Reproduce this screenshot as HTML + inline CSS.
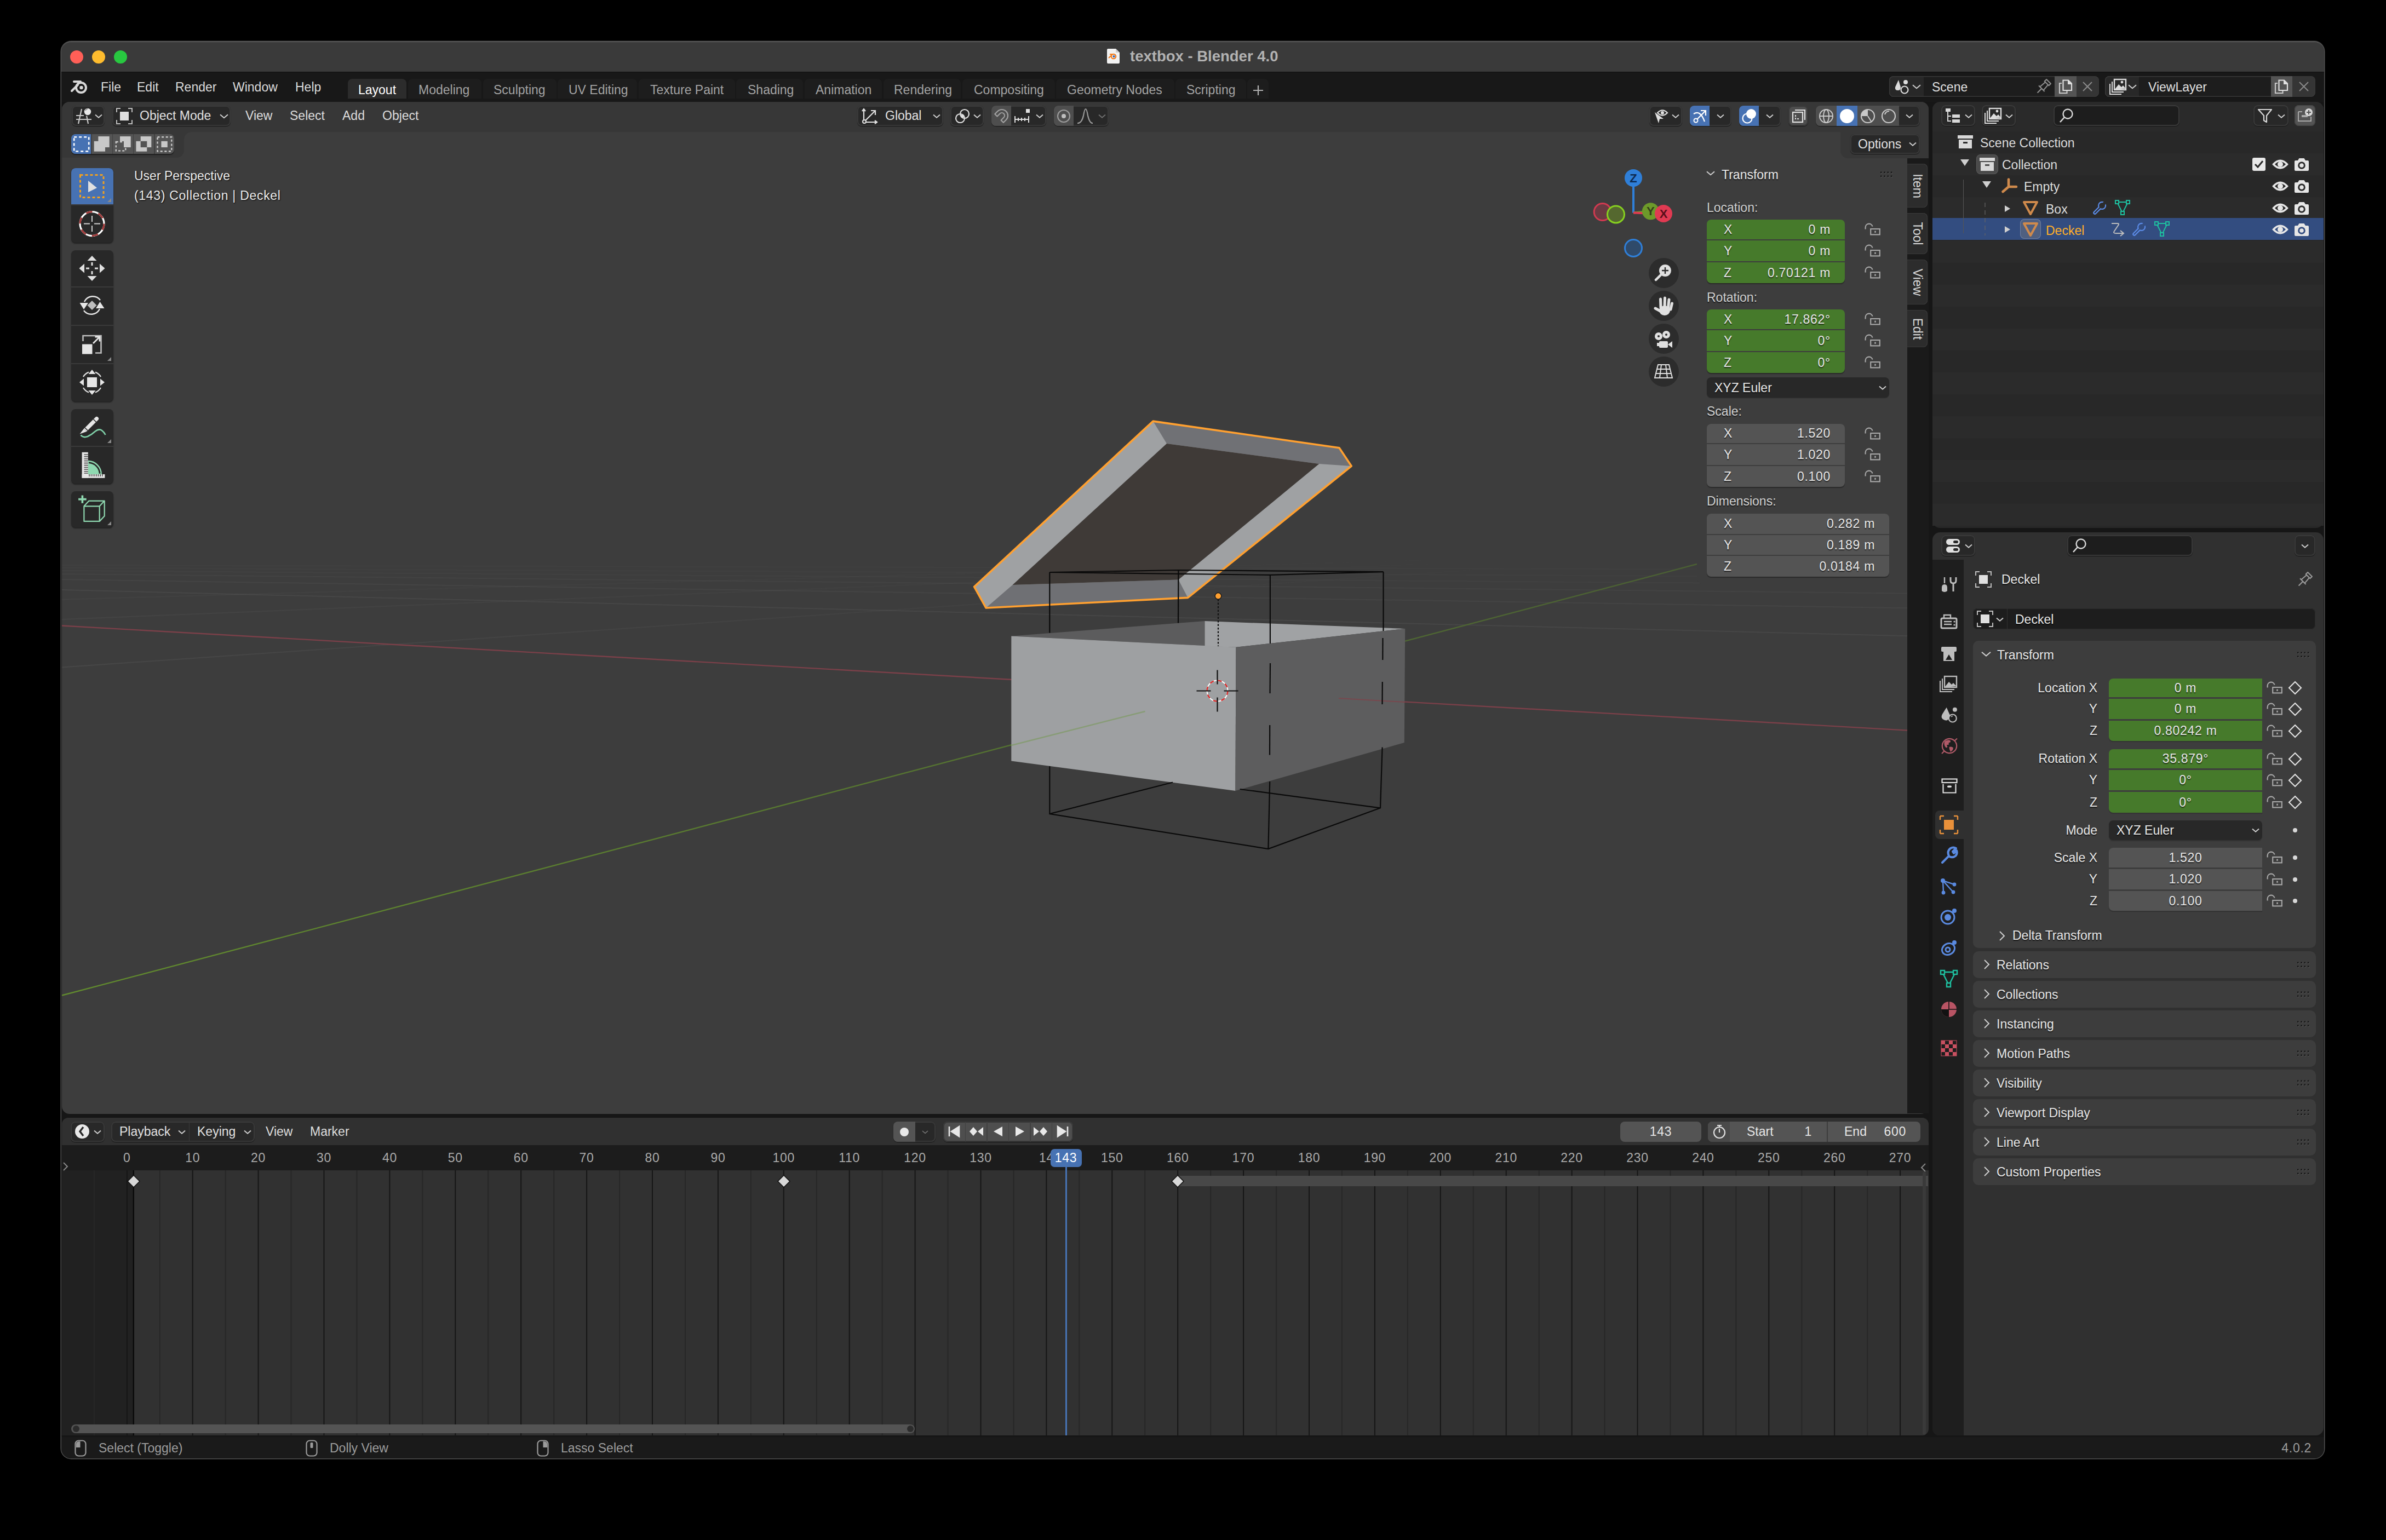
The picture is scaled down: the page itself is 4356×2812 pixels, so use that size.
<!DOCTYPE html><html><head><meta charset="utf-8"><style>
html,body{margin:0;padding:0;}
body{width:4356px;height:2812px;background:#000;position:relative;overflow:hidden;font-family:"Liberation Sans",sans-serif;}
.a{position:absolute;}
.t{position:absolute;white-space:nowrap;line-height:1;}
svg.a{overflow:visible;}
</style></head><body>
<div class="a" style="left:112px;top:76px;width:4131px;height:2587px;background:#161616;border-radius:18px;box-shadow:0 0 0 1.5px #505050;"></div>
<div class="a" style="left:112px;top:2624px;width:4131px;height:39px;background:#1a1a1a;border-radius:0 0 18px 18px;"></div>
<div class="a" style="left:112px;top:132px;width:4131px;height:54px;background:#181818;"></div>
<div class="a" style="left:112px;top:76px;width:4131px;height:56px;background:#3a3a3a;border-radius:18px 18px 0 0;border-top:1px solid #5e5e5e;box-sizing:border-box;"></div>
<div class="a" style="left:112px;top:131px;width:4131px;height:1px;background:#0c0c0c;"></div>
<div class="a" style="left:128px;top:92px;width:24px;height:24px;background:#ff5f57;border-radius:12px;"></div>
<div class="a" style="left:168px;top:92px;width:24px;height:24px;background:#febc2e;border-radius:12px;"></div>
<div class="a" style="left:208px;top:92px;width:24px;height:24px;background:#28c840;border-radius:12px;"></div>
<svg class="a" style="left:2020px;top:88px;" width="25" height="29" viewBox="0 0 25 29"><path d="M1 3 Q1 1 3 1 L17 1 L24 8 L24 26 Q24 28 22 28 L3 28 Q1 28 1 26 Z" fill="#f2f2f2"/><path d="M17 1 L17 8 L24 8" fill="#cfcfcf"/><circle cx="13" cy="15" r="4.2" fill="none" stroke="#f07a1c" stroke-width="2.2"/><circle cx="13.5" cy="15" r="2" fill="#2a5db0"/><path d="M4 18 L10 12 M6 11 L12 11" stroke="#f07a1c" stroke-width="2"/></svg>
<div class="t" style="left:2063px;top:88.7px;font-size:27.5px;color:#b2b2b2;font-weight:bold;">textbox - Blender 4.0</div>
<svg class="a" style="left:128px;top:140px;" width="36" height="34" viewBox="0 0 36 34"><circle cx="20" cy="20" r="9" fill="none" stroke="#d8d8d8" stroke-width="4"/><circle cx="20.5" cy="20" r="3.2" fill="#d8d8d8"/><path d="M3 26 L14 15 M7 9 L19 9" stroke="#d8d8d8" stroke-width="4" stroke-linecap="round"/></svg>
<div class="t" style="left:184px;top:147.5px;font-size:23px;color:#dcdcdc;font-weight:normal;">File</div>
<div class="t" style="left:250px;top:147.5px;font-size:23px;color:#dcdcdc;font-weight:normal;">Edit</div>
<div class="t" style="left:320px;top:147.5px;font-size:23px;color:#dcdcdc;font-weight:normal;">Render</div>
<div class="t" style="left:425px;top:147.5px;font-size:23px;color:#dcdcdc;font-weight:normal;">Window</div>
<div class="t" style="left:539px;top:147.5px;font-size:23px;color:#dcdcdc;font-weight:normal;">Help</div>
<div class="a" style="left:635px;top:144px;width:107px;height:36px;background:#2c2c2c;border-radius:8px 8px 0 0;"></div>
<div class="t" style="left:654px;top:152.5px;font-size:23px;color:#ffffff;font-weight:normal;">Layout</div>
<div class="a" style="left:745px;top:144px;width:134px;height:36px;background:#1d1d1d;border-radius:8px 8px 0 0;"></div>
<div class="t" style="left:764px;top:152.5px;font-size:23px;color:#a3a3a3;font-weight:normal;">Modeling</div>
<div class="a" style="left:882px;top:144px;width:134px;height:36px;background:#1d1d1d;border-radius:8px 8px 0 0;"></div>
<div class="t" style="left:901px;top:152.5px;font-size:23px;color:#a3a3a3;font-weight:normal;">Sculpting</div>
<div class="a" style="left:1018px;top:144px;width:145px;height:36px;background:#1d1d1d;border-radius:8px 8px 0 0;"></div>
<div class="t" style="left:1038px;top:152.5px;font-size:23px;color:#a3a3a3;font-weight:normal;">UV Editing</div>
<div class="a" style="left:1166px;top:144px;width:176px;height:36px;background:#1d1d1d;border-radius:8px 8px 0 0;"></div>
<div class="t" style="left:1187px;top:152.5px;font-size:23px;color:#a3a3a3;font-weight:normal;">Texture Paint</div>
<div class="a" style="left:1344px;top:144px;width:122px;height:36px;background:#1d1d1d;border-radius:8px 8px 0 0;"></div>
<div class="t" style="left:1365px;top:152.5px;font-size:23px;color:#a3a3a3;font-weight:normal;">Shading</div>
<div class="a" style="left:1469px;top:144px;width:141px;height:36px;background:#1d1d1d;border-radius:8px 8px 0 0;"></div>
<div class="t" style="left:1489px;top:152.5px;font-size:23px;color:#a3a3a3;font-weight:normal;">Animation</div>
<div class="a" style="left:1613px;top:144px;width:141px;height:36px;background:#1d1d1d;border-radius:8px 8px 0 0;"></div>
<div class="t" style="left:1632px;top:152.5px;font-size:23px;color:#a3a3a3;font-weight:normal;">Rendering</div>
<div class="a" style="left:1757px;top:144px;width:169px;height:36px;background:#1d1d1d;border-radius:8px 8px 0 0;"></div>
<div class="t" style="left:1778px;top:152.5px;font-size:23px;color:#a3a3a3;font-weight:normal;">Compositing</div>
<div class="a" style="left:1928px;top:144px;width:216px;height:36px;background:#1d1d1d;border-radius:8px 8px 0 0;"></div>
<div class="t" style="left:1948px;top:152.5px;font-size:23px;color:#a3a3a3;font-weight:normal;">Geometry Nodes</div>
<div class="a" style="left:2146px;top:144px;width:129px;height:36px;background:#1d1d1d;border-radius:8px 8px 0 0;"></div>
<div class="t" style="left:2166px;top:152.5px;font-size:23px;color:#a3a3a3;font-weight:normal;">Scripting</div>
<div class="a" style="left:2277px;top:144px;width:39px;height:36px;background:#1d1d1d;border-radius:8px 8px 0 0;"></div>
<svg class="a" style="left:2287px;top:155px;" width="20" height="20" viewBox="0 0 20 20"><path d="M10 1 V19 M1 10 H19" stroke="#b0b0b0" stroke-width="2.2"/></svg>
<div class="a" style="left:3449px;top:139px;width:383px;height:38px;background:#353535;border-radius:8px;box-shadow:inset 0 0 0 1.5px #383838, 0 1px 0 #111;"></div>
<div class="a" style="left:3449px;top:139px;width:63px;height:38px;background:#282828;border-radius:8px 0 0 8px;box-shadow:inset 1.5px 0 0 #383838, inset 0 1.5px 0 #383838, inset 0 -1.5px 0 #383838;"></div>
<div class="a" style="left:3512px;top:139px;width:239px;height:38px;background:#1d1d1d;box-shadow:inset 0 1.5px 0 #383838, inset 0 -1.5px 0 #383838;"></div>
<div class="a" style="left:3751px;top:139px;width:40px;height:38px;background:#545454;"></div>
<svg class="a" style="left:3457px;top:143px;" width="30" height="30" viewBox="0 0 30 30"><path d="M9 3 L3 16 Q2 22 8 22 Q13 22 13 16 Z" fill="#dcdcdc"/><circle cx="22" cy="7" r="4" fill="#dcdcdc"/><circle cx="20" cy="21" r="6.5" fill="none" stroke="#dcdcdc" stroke-width="2.2"/></svg>
<svg class="a" style="left:3490px;top:151px;" width="18" height="14" viewBox="0 0 18 14"><path d="M2 4.2 L9 10.15 L16 4.2" fill="none" stroke="#d0d0d0" stroke-width="2"/></svg>
<div class="t" style="left:3527px;top:147.5px;font-size:23px;color:#e0e0e0;font-weight:normal;">Scene</div>
<svg class="a" style="left:3716px;top:143px;" width="30" height="30" viewBox="0 0 30 30"><g transform="translate(17 13) rotate(45)"><path d="M0 8 V19 M-7.5 8 H7.5 M-4.5 8 L-3.5 -5 M3.5 -5 L4.5 8 M-5.5 -5 H5.5 V-10 H-5.5 Z" fill="none" stroke="#8e8e8e" stroke-width="2.1" stroke-linejoin="round"/></g></svg>
<svg class="a" style="left:3758px;top:145px;" width="26" height="26" viewBox="0 0 26 26"><path d="M8.5 1.5 H18 L24 7.5 V20 H8.5 Z" fill="none" stroke="#e0e0e0" stroke-width="2.2"/><path d="M17 1 V9 H24.5 Z" fill="#e0e0e0"/><path d="M6 7 H2 V25 H15.5 V21" fill="none" stroke="#c8c8c8" stroke-width="2.2"/></svg>
<svg class="a" style="left:3802px;top:149px;" width="18" height="18" viewBox="0 0 18 18"><path d="M1 1 L17 17 M17 1 L1 17" stroke="#8a8a8a" stroke-width="2"/></svg>
<div class="a" style="left:3843px;top:139px;width:384px;height:38px;background:#353535;border-radius:8px;box-shadow:inset 0 0 0 1.5px #383838, 0 1px 0 #111;"></div>
<div class="a" style="left:3843px;top:139px;width:62px;height:38px;background:#282828;border-radius:8px 0 0 8px;box-shadow:inset 1.5px 0 0 #383838, inset 0 1.5px 0 #383838, inset 0 -1.5px 0 #383838;"></div>
<div class="a" style="left:3905px;top:139px;width:241px;height:38px;background:#1d1d1d;box-shadow:inset 0 1.5px 0 #383838, inset 0 -1.5px 0 #383838;"></div>
<div class="a" style="left:4146px;top:139px;width:39px;height:38px;background:#545454;"></div>
<svg class="a" style="left:3852px;top:143px;" width="32" height="30" viewBox="0 0 32 30"><rect x="8" y="2" width="21" height="19" fill="none" stroke="#dcdcdc" stroke-width="2.4"/><path d="M8 21 L16 11 L21 16 L24 13 L29 19" fill="#dcdcdc"/><circle cx="22" cy="7" r="2.4" fill="#dcdcdc"/><path d="M4 6 V25 H25 M0 10 V29 H21" fill="none" stroke="#dcdcdc" stroke-width="2"/></svg>
<svg class="a" style="left:3884px;top:151px;" width="18" height="14" viewBox="0 0 18 14"><path d="M2 4.2 L9 10.15 L16 4.2" fill="none" stroke="#d0d0d0" stroke-width="2"/></svg>
<div class="t" style="left:3922px;top:147.5px;font-size:23px;color:#e0e0e0;font-weight:normal;">ViewLayer</div>
<svg class="a" style="left:4152px;top:145px;" width="26" height="26" viewBox="0 0 26 26"><path d="M8.5 1.5 H18 L24 7.5 V20 H8.5 Z" fill="none" stroke="#e0e0e0" stroke-width="2.2"/><path d="M17 1 V9 H24.5 Z" fill="#e0e0e0"/><path d="M6 7 H2 V25 H15.5 V21" fill="none" stroke="#c8c8c8" stroke-width="2.2"/></svg>
<svg class="a" style="left:4197px;top:149px;" width="18" height="18" viewBox="0 0 18 18"><path d="M1 1 L17 17 M17 1 L1 17" stroke="#8a8a8a" stroke-width="2"/></svg>
<div class="a" style="left:113px;top:186px;width:3408px;height:1848px;background:#3d3d3d;border-radius:14px;overflow:hidden;"></div>
<svg class="a" style="left:0;top:0" width="4356" height="2812" viewBox="0 0 4356 2812"><defs><clipPath id="vpc"><rect x="113" y="240" width="3369" height="1793"/></clipPath></defs><g clip-path="url(#vpc)"><defs><linearGradient id="fadeY" gradientUnits="userSpaceOnUse" x1="113" y1="0" x2="2900" y2="0"><stop offset="0" stop-color="#fff" stop-opacity="1"/><stop offset="1" stop-color="#fff" stop-opacity="0"/></linearGradient><linearGradient id="greenFade" gradientUnits="userSpaceOnUse" x1="113" y1="0" x2="3098" y2="0"><stop offset="0" stop-color="#618a2e"/><stop offset="1" stop-color="#4a5e34"/></linearGradient></defs><path d="M113 1077 L3482 1161.2" stroke="#ffffff" stroke-opacity="0.05" stroke-width="2"/><path d="M113 1058 L3482 1110.2" stroke="#ffffff" stroke-opacity="0.04" stroke-width="2"/><path d="M113 1048 L3482 1083.4" stroke="#ffffff" stroke-opacity="0.03" stroke-width="2"/><path d="M113 1042 L3482 1067.3" stroke="#ffffff" stroke-opacity="0.025" stroke-width="2"/><path d="M113 1037 L3482 1053.8" stroke="#ffffff" stroke-opacity="0.02" stroke-width="2"/><path d="M113 1032 L3482 1040.4" stroke="#ffffff" stroke-opacity="0.015" stroke-width="2"/><path d="M113 1218.4 L3193 1006" stroke="url(#fadeY)" stroke-opacity="0.05" stroke-width="2"/><path d="M113 1131 L3193 1006" stroke="url(#fadeY)" stroke-opacity="0.035" stroke-width="2"/><path d="M113 1094.7 L3193 1006" stroke="url(#fadeY)" stroke-opacity="0.025" stroke-width="2"/><path d="M113 1142.5 L3482 1333.6" stroke="#7a4049" stroke-width="2.4"/><path d="M113 1817.6 L3098 1030" stroke="url(#greenFade)" stroke-width="2.4"/><polygon points="1846.3,1161.5 2199.5,1134.0 2199.5,1180.0 2256.5,1181.8" fill="#5c5c5d"/><polygon points="2199.5,1134.0 2565.2,1148.0 2256.5,1181.8 2199.5,1180.0" fill="#a0a2a4"/><polygon points="1846.3,1161.5 2256.5,1181.8 2255.4,1444.0 1846.3,1389.6" fill="#9ea0a2"/><path d="M1846.3 1361 L2090.5 1299" stroke="#7a9a5a" stroke-opacity="0.6" stroke-width="2.4"/><polygon points="2256.5,1181.8 2565.2,1148.0 2563.8,1356.0 2255.4,1444.0" fill="#5d5d5e"/><path d="M2444 1275 L2565 1282" stroke="#8a3a45" stroke-opacity="0.6" stroke-width="2"/><polygon points="2105.1,769.1 2445.0,817.8 2467.2,851.0 2168.6,1091.4 1800.0,1110.0 1778.6,1071.4" fill="#9fa1a3"/><polygon points="2105.1,769.1 2445.0,817.8 2467.2,851.0 2408.2,846.9 2130.0,810.0" fill="#707175"/><polygon points="1848.6,1068.0 2151.4,1058.6 2168.6,1091.4 1800.0,1110.0" fill="#6f7074"/><polygon points="2130.0,810.0 2408.2,846.9 2151.4,1058.6 1848.6,1068.0" fill="#3f3a37"/><polygon points="2105.1,769.1 2445.0,817.8 2467.2,851.0 2168.6,1091.4 1800.0,1110.0 1778.6,1071.4" fill="none" stroke="#ffa030" stroke-width="3.6" stroke-linejoin="round"/><polyline points="1916.3,1045.0 2151.4,1041.0 2525.5,1044.2 2318.9,1049.9 1916.3,1045.0" fill="none" stroke="#0a0a0a" stroke-width="2.2"/><polyline points="1916.3,1045.0 1916.3,1155.5" fill="none" stroke="#0a0a0a" stroke-width="2.2"/><polyline points="2151.4,1041.0 2151.0,1137.5" fill="none" stroke="#0a0a0a" stroke-width="2.2"/><polyline points="2318.9,1049.9 2318.9,1175.0" fill="none" stroke="#0a0a0a" stroke-width="2.2"/><polyline points="2525.5,1044.2 2525.5,1152.0" fill="none" stroke="#0a0a0a" stroke-width="2.2"/><polyline points="2319.0,1211.0 2318.5,1266.0" fill="none" stroke="#0a0a0a" stroke-width="2.2"/><polyline points="2318.2,1324.0 2318.0,1378.5" fill="none" stroke="#0a0a0a" stroke-width="2.2"/><polyline points="2524.5,1165.0 2524.3,1205.0" fill="none" stroke="#0a0a0a" stroke-width="2.2"/><polyline points="2523.8,1245.0 2523.5,1286.0" fill="none" stroke="#0a0a0a" stroke-width="2.2"/><polyline points="1916.3,1399.0 1916.3,1486.0 2315.4,1550.0 2520.0,1475.3 2523.6,1364.5" fill="none" stroke="#0a0a0a" stroke-width="2.2"/><polyline points="2318.2,1427.0 2315.4,1550.0" fill="none" stroke="#0a0a0a" stroke-width="2.2"/><polyline points="1916.3,1486.0 2141.0,1428.5" fill="none" stroke="#0a0a0a" stroke-width="2.2"/><polyline points="2520.0,1475.3 2263.7,1441.0" fill="none" stroke="#0a0a0a" stroke-width="2.2"/><path d="M2224 1094 V1180" stroke="#111" stroke-width="2.2" stroke-dasharray="3.5 3"/><circle cx="2224" cy="1088.3" r="5.8" fill="#ffa030" stroke="#1a1a1a" stroke-width="1.4"/><circle cx="2222.5" cy="1261.5" r="19" fill="none" stroke="#ffffff" stroke-width="2"/><circle cx="2222.5" cy="1261.5" r="19" fill="none" stroke="#e02020" stroke-width="2.2" stroke-dasharray="7.46 7.46"/><path d="M2184.5 1261.5 H2210.5 M2234.5 1261.5 H2260.5 M2222.5 1223.5 V1249.5 M2222.5 1273.5 V1299.5" stroke="#111" stroke-width="2.2"/></g></svg>
<div class="a" style="left:113px;top:186px;width:3408px;height:55px;background:#373737;border-radius:14px 14px 0 0;"></div>
<div class="a" style="left:131px;top:193px;width:60px;height:37px;background:#282828;border-radius:8px;box-shadow:inset 0 0 0 2px #393939, 0 1px 1px #161616;"></div>
<svg class="a" style="left:137px;top:196px;" width="34" height="32" viewBox="0 0 34 32"><path d="M2 15 H16 M2 22 H30 M12 3 L6 30 M21 15 L24 30" stroke="#c8c8c8" stroke-width="2.2" fill="none"/><circle cx="23" cy="8" r="7" fill="#e8e8e8" stroke="#282828" stroke-width="1.5"/><path d="M19 6 Q20 3 23 3" stroke="#888" stroke-width="1.5" fill="none"/></svg>
<svg class="a" style="left:172px;top:206px;" width="16" height="12" viewBox="0 0 16 12"><path d="M2 3.5999999999999996 L8 8.7 L14 3.5999999999999996" fill="none" stroke="#d0d0d0" stroke-width="2"/></svg>
<div class="a" style="left:205px;top:193px;width:216px;height:37px;background:#282828;border-radius:8px;box-shadow:inset 0 0 0 2px #393939, 0 1px 1px #161616;"></div>
<svg class="a" style="left:212px;top:197px;" width="30" height="30" viewBox="0 0 30 30"><path d="M1 8 V1 H8 M22 1 H29 V8 M29 22 V29 H22 M8 29 H1 V22" fill="none" stroke="#bdbdbd" stroke-width="2"/><rect x="7" y="7" width="16" height="16" fill="#e0e0e0"/></svg>
<div class="t" style="left:255px;top:200.0px;font-size:23px;color:#e0e0e0;font-weight:normal;">Object Mode</div>
<svg class="a" style="left:400px;top:205px;" width="18" height="14" viewBox="0 0 18 14"><path d="M2 4.2 L9 10.15 L16 4.2" fill="none" stroke="#d0d0d0" stroke-width="2"/></svg>
<div class="t" style="left:448px;top:200.0px;font-size:23px;color:#dcdcdc;font-weight:normal;">View</div>
<div class="t" style="left:529px;top:200.0px;font-size:23px;color:#dcdcdc;font-weight:normal;">Select</div>
<div class="t" style="left:625px;top:200.0px;font-size:23px;color:#dcdcdc;font-weight:normal;">Add</div>
<div class="t" style="left:698px;top:200.0px;font-size:23px;color:#dcdcdc;font-weight:normal;">Object</div>
<div class="a" style="left:1565px;top:193px;width:157px;height:37px;background:#282828;border-radius:8px;box-shadow:inset 0 0 0 2px #393939, 0 1px 1px #161616;"></div>
<svg class="a" style="left:1573px;top:197px;" width="30" height="30" viewBox="0 0 30 30"><path d="M4 2 V26 H28" fill="none" stroke="#e0e0e0" stroke-width="2.2"/><path d="M1 6 L4 2 L7 6 M24 23 L28 26 L24 29 M5 25 L24 6 M17 5 H25 V13" fill="none" stroke="#e0e0e0" stroke-width="2.2"/><circle cx="5" cy="25" r="3" fill="#303030" stroke="#e0e0e0" stroke-width="2"/></svg>
<div class="t" style="left:1616px;top:200.0px;font-size:23px;color:#e0e0e0;font-weight:normal;">Global</div>
<svg class="a" style="left:1702px;top:206px;" width="16" height="12" viewBox="0 0 16 12"><path d="M2 3.5999999999999996 L8 8.7 L14 3.5999999999999996" fill="none" stroke="#d0d0d0" stroke-width="2"/></svg>
<div class="a" style="left:1735px;top:193px;width:61px;height:37px;background:#282828;border-radius:8px;box-shadow:inset 0 0 0 2px #393939, 0 1px 1px #161616;"></div>
<svg class="a" style="left:1742px;top:197px;" width="32" height="30" viewBox="0 0 32 30"><circle cx="19" cy="11" r="8" fill="none" stroke="#e0e0e0" stroke-width="2.2"/><circle cx="11" cy="19" r="8" fill="none" stroke="#e0e0e0" stroke-width="2.2"/><circle cx="15" cy="15" r="3" fill="#e0e0e0"/></svg>
<svg class="a" style="left:1776px;top:206px;" width="16" height="12" viewBox="0 0 16 12"><path d="M2 3.5999999999999996 L8 8.7 L14 3.5999999999999996" fill="none" stroke="#d0d0d0" stroke-width="2"/></svg>
<div class="a" style="left:1810px;top:193px;width:100px;height:37px;background:#282828;border-radius:8px;box-shadow:inset 0 0 0 2px #393939, 0 1px 1px #161616;"></div>
<div class="a" style="left:1810px;top:193px;width:36px;height:37px;background:#4e4e4e;border-radius:8px 0 0 8px;"></div>
<svg class="a" style="left:1813px;top:197px;" width="32" height="30" viewBox="0 0 32 30"><g transform="translate(16 14) rotate(45)"><path d="M-11 0 A11 11 0 0 1 11 0 V7 H5 V0 A5 5 0 0 0 -5 0 V7 H-11 Z" fill="none" stroke="#a0a0a0" stroke-width="2.2" stroke-linejoin="round"/></g></svg>
<svg class="a" style="left:1851px;top:197px;" width="32" height="30" viewBox="0 0 32 30"><rect x="22" y="2" width="7" height="7" fill="#e0e0e0"/><path d="M2 15 V27 M2 21 H27 M8 18 V24 M14 18 V24 M20 18 V24 M27 15 V27" stroke="#e0e0e0" stroke-width="2"/></svg>
<svg class="a" style="left:1890px;top:206px;" width="16" height="12" viewBox="0 0 16 12"><path d="M2 3.5999999999999996 L8 8.7 L14 3.5999999999999996" fill="none" stroke="#d0d0d0" stroke-width="2"/></svg>
<div class="a" style="left:1924px;top:193px;width:100px;height:37px;background:#282828;border-radius:8px;box-shadow:inset 0 0 0 2px #393939, 0 1px 1px #161616;"></div>
<div class="a" style="left:1924px;top:193px;width:36px;height:37px;background:#4e4e4e;border-radius:8px 0 0 8px;"></div>
<svg class="a" style="left:1928px;top:197px;" width="30" height="30" viewBox="0 0 30 30"><circle cx="14" cy="15" r="11" fill="none" stroke="#9a9a9a" stroke-width="2.2"/><circle cx="14" cy="15" r="4" fill="#bdbdbd"/></svg>
<svg class="a" style="left:1965px;top:197px;" width="32" height="30" viewBox="0 0 32 30"><path d="M2 28 Q10 28 13 14 Q15 2 17 2 Q19 2 21 14 Q24 28 30 28" fill="none" stroke="#9a9a9a" stroke-width="2.2"/></svg>
<svg class="a" style="left:2004px;top:206px;" width="16" height="12" viewBox="0 0 16 12"><path d="M2 3.5999999999999996 L8 8.7 L14 3.5999999999999996" fill="none" stroke="#6e6e6e" stroke-width="2"/></svg>
<div class="a" style="left:3011px;top:193px;width:60px;height:37px;background:#282828;border-radius:8px;box-shadow:inset 0 0 0 2px #393939, 0 1px 1px #161616;"></div>
<svg class="a" style="left:3016px;top:197px;" width="34" height="32" viewBox="0 0 34 32"><path d="M5 8 L12 28 L14 20 L21 20 Z" fill="#e0e0e0"/><path d="M10 9 Q19 0 28 9 Q19 18 10 9 Z" fill="none" stroke="#e0e0e0" stroke-width="2.2"/><circle cx="19" cy="9" r="3" fill="#e0e0e0"/></svg>
<svg class="a" style="left:3051px;top:206px;" width="16" height="12" viewBox="0 0 16 12"><path d="M2 3.5999999999999996 L8 8.7 L14 3.5999999999999996" fill="none" stroke="#d0d0d0" stroke-width="2"/></svg>
<div class="a" style="left:3085px;top:193px;width:76px;height:37px;background:#282828;border-radius:8px;box-shadow:inset 0 0 0 2px #393939, 0 1px 1px #161616;"></div>
<div class="a" style="left:3085px;top:193px;width:36px;height:37px;background:#4772b3;border-radius:8px 0 0 8px;"></div>
<svg class="a" style="left:3088px;top:196px;" width="32" height="32" viewBox="0 0 32 32"><circle cx="8" cy="24" r="3.5" fill="none" stroke="#fff" stroke-width="2"/><path d="M10 22 L25 7 M17 6 H26 V15 M4 12 Q16 4 24 26" fill="none" stroke="#fff" stroke-width="2.2"/></svg>
<svg class="a" style="left:3133px;top:206px;" width="16" height="12" viewBox="0 0 16 12"><path d="M2 3.5999999999999996 L8 8.7 L14 3.5999999999999996" fill="none" stroke="#d0d0d0" stroke-width="2"/></svg>
<div class="a" style="left:3175px;top:193px;width:76px;height:37px;background:#282828;border-radius:8px;box-shadow:inset 0 0 0 2px #393939, 0 1px 1px #161616;"></div>
<div class="a" style="left:3175px;top:193px;width:36px;height:37px;background:#4772b3;border-radius:8px 0 0 8px;"></div>
<svg class="a" style="left:3178px;top:196px;" width="32" height="32" viewBox="0 0 32 32"><circle cx="19" cy="12" r="9" fill="#fff"/><circle cx="12" cy="20" r="8.5" fill="none" stroke="#fff" stroke-width="2.2"/></svg>
<svg class="a" style="left:3223px;top:206px;" width="16" height="12" viewBox="0 0 16 12"><path d="M2 3.5999999999999996 L8 8.7 L14 3.5999999999999996" fill="none" stroke="#d0d0d0" stroke-width="2"/></svg>
<div class="a" style="left:3265px;top:193px;width:36px;height:37px;background:#4e4e4e;border-radius:8px;box-shadow:inset 0 0 0 2px #393939, 0 1px 1px #161616;"></div>
<svg class="a" style="left:3268px;top:196px;" width="32" height="32" viewBox="0 0 32 32"><path d="M9 5 H27 V23" fill="none" stroke="#e0e0e0" stroke-width="2.2"/><rect x="5" y="9" width="18" height="18" fill="none" stroke="#e0e0e0" stroke-width="2.2"/><path d="M10 14 V21 H17" fill="none" stroke="#e0e0e0" stroke-width="2" stroke-dasharray="3 2"/></svg>
<div class="a" style="left:3315px;top:193px;width:190px;height:37px;background:#282828;border-radius:8px;box-shadow:inset 0 0 0 2px #393939, 0 1px 1px #161616;"></div>
<div class="a" style="left:3315px;top:193px;width:38px;height:37px;background:#4e4e4e;border-radius:8px 0 0 8px;"></div>
<div class="a" style="left:3353px;top:193px;width:38px;height:37px;background:#4772b3;"></div>
<div class="a" style="left:3391px;top:193px;width:38px;height:37px;background:#4e4e4e;"></div>
<div class="a" style="left:3429px;top:193px;width:38px;height:37px;background:#4e4e4e;"></div>
<svg class="a" style="left:3319px;top:197px;" width="30" height="30" viewBox="0 0 30 30"><circle cx="15" cy="15" r="12" fill="none" stroke="#c8c8c8" stroke-width="2"/><ellipse cx="15" cy="15" rx="5" ry="12" fill="none" stroke="#c8c8c8" stroke-width="2"/><path d="M3 15 H27" stroke="#c8c8c8" stroke-width="2"/></svg>
<svg class="a" style="left:3357px;top:197px;" width="30" height="30" viewBox="0 0 30 30"><circle cx="15" cy="15" r="13" fill="#ffffff"/></svg>
<svg class="a" style="left:3395px;top:197px;" width="30" height="30" viewBox="0 0 30 30"><circle cx="15" cy="15" r="12" fill="none" stroke="#c8c8c8" stroke-width="2.2"/><path d="M15 3 A12 12 0 0 0 3 15 L15 15 Z" fill="#c8c8c8"/><path d="M15 15 L22 26" stroke="#c8c8c8" stroke-width="2"/></svg>
<svg class="a" style="left:3433px;top:197px;" width="30" height="30" viewBox="0 0 30 30"><circle cx="15" cy="15" r="12" fill="none" stroke="#c8c8c8" stroke-width="2.2"/><path d="M8 12 Q10 6 16 6" fill="none" stroke="#c8c8c8" stroke-width="2.2"/></svg>
<svg class="a" style="left:3478px;top:206px;" width="16" height="12" viewBox="0 0 16 12"><path d="M2 3.5999999999999996 L8 8.7 L14 3.5999999999999996" fill="none" stroke="#d0d0d0" stroke-width="2"/></svg>
<div class="a" style="left:113px;top:241px;width:223px;height:47px;background:#373737;border-radius:0 0 14px 0;"></div>
<div class="a" style="left:130px;top:245px;width:188px;height:36px;background:#545454;border-radius:8px;box-shadow:0 2px 1px #202020;"></div>
<div class="a" style="left:130px;top:245px;width:36px;height:36px;background:#4772b3;border-radius:8px 0 0 8px;"></div>
<div class="a" style="left:166.3px;top:245px;width:1.5px;height:36px;background:#404040;"></div>
<div class="a" style="left:204.5px;top:245px;width:1.5px;height:36px;background:#404040;"></div>
<div class="a" style="left:242.7px;top:245px;width:1.5px;height:36px;background:#404040;"></div>
<div class="a" style="left:281px;top:245px;width:1.5px;height:36px;background:#404040;"></div>
<svg class="a" style="left:130px;top:245px;" width="40" height="36" viewBox="0 0 40 36"><rect x="5.2" y="5.2" width="27" height="26" fill="none" stroke="#ffffff" stroke-width="2.6" stroke-dasharray="5 4"/></svg>
<svg class="a" style="left:166.3px;top:245px;" width="40" height="36" viewBox="0 0 40 36"><rect x="5.7" y="12.8" width="20.3" height="18.8" fill="#c8c8c8"/><rect x="13.4" y="4" width="20.300000000000004" height="20" fill="#c8c8c8"/></svg>
<svg class="a" style="left:204.5px;top:245px;" width="40" height="36" viewBox="0 0 40 36"><rect x="14" y="4" width="19.5" height="20" fill="#c8c8c8"/><rect x="14" y="12.8" width="7" height="11.2" fill="#545454"/><rect x="6.8" y="14" width="17.5" height="16.4" fill="none" stroke="#c8c8c8" stroke-width="2.4" stroke-dasharray="4 3.2"/><rect x="14" y="4" width="19.5" height="8.8" fill="#c8c8c8"/><rect x="21" y="12.8" width="12.5" height="11.2" fill="#c8c8c8"/></svg>
<svg class="a" style="left:242.7px;top:245px;" width="40" height="36" viewBox="0 0 40 36"><rect x="5.4" y="12.8" width="19.9" height="18.8" fill="#c8c8c8"/><rect x="13.7" y="4" width="19.599999999999998" height="20" fill="#c8c8c8"/><rect x="13.7" y="12.8" width="11.600000000000001" height="11.2" fill="#545454"/></svg>
<svg class="a" style="left:281px;top:245px;" width="40" height="36" viewBox="0 0 40 36"><rect x="6.5" y="5.2" width="25.8" height="26" fill="none" stroke="#c8c8c8" stroke-width="2.4" stroke-dasharray="4 3.6"/><rect x="13.4" y="12.8" width="11.4" height="11.2" fill="#c8c8c8"/></svg>
<div class="a" style="left:336px;top:241px;width:14px;height:14px;background:#373737;"></div>
<div class="a" style="left:336px;top:241px;width:28px;height:28px;background:#3d3d3d;border-radius:14px 0 0 0;"></div>
<div class="a" style="left:3360px;top:241px;width:161px;height:48px;background:#373737;border-radius:0 0 0 14px;"></div>
<div class="a" style="left:3378px;top:245px;width:127px;height:36px;background:#282828;border-radius:8px;box-shadow:inset 0 0 0 2px #393939, 0 1px 1px #161616;"></div>
<div class="t" style="left:3392px;top:251.5px;font-size:23px;color:#e0e0e0;font-weight:normal;">Options</div>
<svg class="a" style="left:3484px;top:257px;" width="16" height="12" viewBox="0 0 16 12"><path d="M2 3.5999999999999996 L8 8.7 L14 3.5999999999999996" fill="none" stroke="#d0d0d0" stroke-width="2"/></svg>
<div class="t" style="left:245px;top:309.5px;font-size:23px;color:#ececec;font-weight:normal;text-shadow:1px 1px 2px #000;">User Perspective</div>
<div class="t" style="left:245px;top:345.5px;font-size:23px;color:#ececec;font-weight:normal;text-shadow:1px 1px 2px #000;letter-spacing:0.7px;">(143) Collection | Deckel</div>
<div class="a" style="left:130px;top:307px;width:77px;height:136px;background:#282828;border-radius:8px;box-shadow:0 2px 2px #222;"></div>
<div class="a" style="left:130px;top:457px;width:77px;height:276px;background:#282828;border-radius:8px;box-shadow:0 2px 2px #222;"></div>
<div class="a" style="left:130px;top:747px;width:77px;height:136px;background:#282828;border-radius:8px;box-shadow:0 2px 2px #222;"></div>
<div class="a" style="left:130px;top:897px;width:77px;height:66px;background:#282828;border-radius:8px;box-shadow:0 2px 2px #222;"></div>
<div class="a" style="left:130px;top:307px;width:77px;height:66px;background:#4772b3;border-radius:8px 8px 0 0;"></div>
<div class="a" style="left:130px;top:373px;width:77px;height:2px;background:#3a3a3a;"></div>
<div class="a" style="left:130px;top:523px;width:77px;height:2px;background:#3a3a3a;"></div>
<div class="a" style="left:130px;top:593px;width:77px;height:2px;background:#3a3a3a;"></div>
<div class="a" style="left:130px;top:663px;width:77px;height:2px;background:#3a3a3a;"></div>
<div class="a" style="left:130px;top:814px;width:77px;height:2px;background:#3a3a3a;"></div>
<svg class="a" style="left:196px;top:362px;" width="7" height="7" viewBox="0 0 7 7"><path d="M7 0 V7 H0 Z" fill="#8a8a8a"/></svg>
<svg class="a" style="left:196px;top:652px;" width="7" height="7" viewBox="0 0 7 7"><path d="M7 0 V7 H0 Z" fill="#8a8a8a"/></svg>
<svg class="a" style="left:196px;top:802px;" width="7" height="7" viewBox="0 0 7 7"><path d="M7 0 V7 H0 Z" fill="#8a8a8a"/></svg>
<svg class="a" style="left:196px;top:952px;" width="7" height="7" viewBox="0 0 7 7"><path d="M7 0 V7 H0 Z" fill="#8a8a8a"/></svg>
<svg class="a" style="left:144px;top:317px;" width="48" height="48" viewBox="0 0 48 48"><rect x="2.5" y="2.5" width="42.5" height="41" fill="none" stroke="#f0a020" stroke-width="3" stroke-dasharray="5 4"/><path d="M17 13 L33 26 L17 34 Z" fill="#e0e0e0"/></svg>
<svg class="a" style="left:144px;top:385px;" width="48" height="48" viewBox="0 0 48 48"><circle cx="24" cy="23.6" r="22" fill="none" stroke="#ffffff" stroke-width="3.2"/><circle cx="24" cy="23.6" r="22" fill="none" stroke="#a33a3a" stroke-width="3.2" stroke-dasharray="11.5 11.5"/><path d="M24 9 V20 M24 27 V38 M9 23.6 H20 M28 23.6 H39" stroke="#cfcfcf" stroke-width="2"/></svg>
<svg class="a" style="left:144px;top:466px;" width="48" height="48" viewBox="0 0 48 48"><path d="M24 1 L15.5 10 H32.5 Z M24 47 L15.5 38 H32.5 Z M0.5 24 L10 15.5 V32.5 Z M47.5 24 L38 15.5 V32.5 Z" fill="#e0e0e0"/><path d="M24 13 V19 M24 29 V35 M13 24 H19 M29 24 H35" stroke="#e0e0e0" stroke-width="3"/></svg>
<svg class="a" style="left:144px;top:534px;" width="48" height="48" viewBox="0 0 48 48"><path d="M24 15 L32.5 23.6 L24 32 L15.5 23.6 Z" fill="#bdbdbd"/><path d="M10 17 A17 17 0 0 1 39 14 M38 30 A17 17 0 0 1 9 33" fill="none" stroke="#e6e6e6" stroke-width="2.4"/><path d="M1.5 19 H17 L9 31 Z M31 29 H46.5 L38.5 17 Z" fill="#e6e6e6"/></svg>
<svg class="a" style="left:144px;top:604px;" width="48" height="48" viewBox="0 0 48 48"><rect x="6" y="24.5" width="18.5" height="18" fill="#e6e6e6"/><path d="M7.5 19 V9 H40.5 V40.5 H30" fill="none" stroke="#bdbdbd" stroke-width="2.6"/><path d="M26 23 L37 12 M29.5 11 H38 V19.5" fill="none" stroke="#e6e6e6" stroke-width="2.8"/></svg>
<svg class="a" style="left:144px;top:674px;" width="48" height="48" viewBox="0 0 48 48"><rect x="15" y="15" width="18" height="18" fill="#e6e6e6"/><path d="M24 1 L17.5 9 H30.5 Z M24 47 L17.5 39 H30.5 Z M1 24 L9 17.5 V30.5 Z M47 24 L39 17.5 V30.5 Z" fill="#e6e6e6"/><path d="M8 14 A20 20 0 0 1 18 5.5 M30 5.5 A20 20 0 0 1 40 14 M40 34 A20 20 0 0 1 30 42.5 M18 42.5 A20 20 0 0 1 8 34" fill="none" stroke="#e6e6e6" stroke-width="2.2"/></svg>
<svg class="a" style="left:144px;top:756px;" width="48" height="48" viewBox="0 0 48 48"><path d="M3.5 38.5 Q8 44 16 41 Q23 38 30 31.5 Q37 26 42 30 Q46 33 48.5 38" fill="none" stroke="#7fd0a8" stroke-width="2.6"/><path d="M9 27 L30 6 Q32.5 3.5 35 6 Q37.5 8.5 35 11 L14 32 Z" fill="#e6e6e6"/><path d="M9 27 L14 32 L1.5 36.5 Z" fill="#e6e6e6"/><path d="M11 25 L16 30" stroke="#282828" stroke-width="1.6"/><path d="M26.5 9.5 L31.5 14.5" stroke="#282828" stroke-width="1.6"/></svg>
<svg class="a" style="left:144px;top:824px;" width="48" height="48" viewBox="0 0 48 48"><path d="M16.8 42 V18 A24 24 0 0 1 40.8 42 Z" fill="none" stroke="#8fd8b0" stroke-width="2.4"/><path d="M16.8 42 V22 A20 20 0 0 1 36.8 42 Z" fill="#8fd8b0"/><rect x="5.6" y="1.8" width="11.2" height="47" fill="#e6e6e6"/><rect x="5.6" y="42" width="41.8" height="6.8" fill="#e6e6e6"/><path d="M9.5 6.0 H16.8" stroke="#282828" stroke-width="1.2"/><path d="M9.5 9.4 H16.8" stroke="#282828" stroke-width="1.2"/><path d="M9.5 12.8 H16.8" stroke="#282828" stroke-width="1.2"/><path d="M9.5 16.2 H16.8" stroke="#282828" stroke-width="1.2"/><path d="M9.5 19.6 H16.8" stroke="#282828" stroke-width="1.2"/><path d="M9.5 23.0 H16.8" stroke="#282828" stroke-width="1.2"/><path d="M9.5 26.4 H16.8" stroke="#282828" stroke-width="1.2"/><path d="M9.5 29.8 H16.8" stroke="#282828" stroke-width="1.2"/><path d="M9.5 33.2 H16.8" stroke="#282828" stroke-width="1.2"/><path d="M9.5 36.6 H16.8" stroke="#282828" stroke-width="1.2"/><path d="M9.5 40.0 H16.8" stroke="#282828" stroke-width="1.2"/><path d="M19.0 42 V46" stroke="#282828" stroke-width="1.2"/><path d="M22.4 42 V46" stroke="#282828" stroke-width="1.2"/><path d="M25.8 42 V46" stroke="#282828" stroke-width="1.2"/><path d="M29.2 42 V46" stroke="#282828" stroke-width="1.2"/><path d="M32.6 42 V46" stroke="#282828" stroke-width="1.2"/><path d="M36.0 42 V46" stroke="#282828" stroke-width="1.2"/><path d="M39.4 42 V46" stroke="#282828" stroke-width="1.2"/><path d="M42.8 42 V46" stroke="#282828" stroke-width="1.2"/></svg>
<svg class="a" style="left:144px;top:906px;" width="48" height="48" viewBox="0 0 48 48"><path d="M9.4 18.3 H37.7 V45.9 H9.4 Z M9.4 18.3 L18.4 8.6 H46.7 V36.2 L37.7 45.9 M37.7 18.3 L46.7 8.6" fill="none" stroke="#8fd8b0" stroke-width="2.2" stroke-linejoin="round"/><path d="M6.4 -1.5 V12.7 M-0.9 5.6 H13.7" stroke="#8fd8b0" stroke-width="3.6"/></svg>
<svg class="a" style="left:0;top:0" width="4356" height="2812"><path d="M2982 388.6 V340" stroke="#2f7fd8" stroke-width="4"/><path d="M2982 388.6 L3013 385.7" stroke="#6d9a2a" stroke-width="4"/><path d="M2982 388.6 L3022 390" stroke="#e03a52" stroke-width="4"/><circle cx="2925.7" cy="387" r="15.5" fill="#6a3a42" stroke="#d03a50" stroke-width="3"/><circle cx="2982" cy="452.9" r="15.5" fill="#2f4a6a" stroke="#2f7fd8" stroke-width="3"/><circle cx="2950" cy="391.4" r="15.5" fill="#55682f" stroke="#86d020" stroke-width="3"/><circle cx="3013.4" cy="385.7" r="15.5" fill="#6d9a2a"/><text x="3013.4" y="393" text-anchor="middle" font-family="Liberation Sans" font-weight="bold" font-size="22" fill="#334018">Y</text><circle cx="3037" cy="390" r="16" fill="#e03a52"/><text x="3037" y="398" text-anchor="middle" font-family="Liberation Sans" font-weight="bold" font-size="22" fill="#5a0f1a">X</text><circle cx="2982" cy="324.9" r="16" fill="#2f7fd8"/><text x="2982" y="333" text-anchor="middle" font-family="Liberation Sans" font-weight="bold" font-size="22" fill="#0d2a50">Z</text></svg>
<div class="a" style="left:3009.5px;top:471.1px;width:55px;height:55px;background:#2c2c2c;border-radius:28px;"></div>
<div class="a" style="left:3009.5px;top:531.1px;width:55px;height:55px;background:#2c2c2c;border-radius:28px;"></div>
<div class="a" style="left:3009.5px;top:591.1px;width:55px;height:55px;background:#2c2c2c;border-radius:28px;"></div>
<div class="a" style="left:3009.5px;top:651.1px;width:55px;height:55px;background:#2c2c2c;border-radius:28px;"></div>
<svg class="a" style="left:3017px;top:478px;" width="40" height="40" viewBox="0 0 40 40"><circle cx="23" cy="16" r="11" fill="#e0e0e0"/><path d="M23 10 V22 M17 16 H29" stroke="#2c2c2c" stroke-width="2.4"/><path d="M15 24 L6 33" stroke="#e0e0e0" stroke-width="4.5" stroke-linecap="round"/></svg>
<svg class="a" style="left:3017px;top:538px;" width="40" height="40" viewBox="0 0 40 40"><ellipse cx="22" cy="29" rx="10" ry="9" fill="#e0e0e0"/><path d="M15 24 L14.5 8 M22 23 L22.5 6 M28.5 24 L30 9 M33 27 L35.5 16 M14 30 L5 25" stroke="#e0e0e0" stroke-width="5" stroke-linecap="round"/></svg>
<svg class="a" style="left:3017px;top:598px;" width="40" height="40" viewBox="0 0 40 40"><circle cx="11" cy="16" r="7" fill="#e0e0e0"/><circle cx="25" cy="13" r="7" fill="#e0e0e0"/><circle cx="11" cy="16" r="2" fill="#2c2c2c"/><circle cx="25" cy="13" r="2" fill="#2c2c2c"/><rect x="12" y="25" width="16" height="12" rx="2" fill="#e0e0e0"/><path d="M28 31 L36 25 V37 Z M8 28 H12 V34 H8 Z" fill="#e0e0e0"/></svg>
<svg class="a" style="left:3017px;top:658px;" width="40" height="40" viewBox="0 0 40 40"><path d="M10 8 H30 L36 32 H4 Z M16 8 L13 32 M24 8 L27 32 M8 16 H32 M6 24 H34" fill="none" stroke="#e0e0e0" stroke-width="2"/></svg>
<div class="a" style="left:3098px;top:293px;width:384px;height:775px;background:#3d3d3d;border-radius:14px 0 0 14px;opacity:0.9;"></div>
<svg class="a" style="left:3114px;top:309px;" width="18" height="14" viewBox="0 0 18 14"><path d="M2 4.2 L9 10.15 L16 4.2" fill="none" stroke="#cfcfcf" stroke-width="2"/></svg>
<div class="t" style="left:3143px;top:307.5px;font-size:23px;color:#e8e8e8;font-weight:normal;text-shadow:0 1.5px 1.5px rgba(0,0,0,0.6);">Transform</div>
<svg class="a" style="left:3432px;top:312px;" width="28" height="16" viewBox="0 0 28 16"><rect x="1.5" y="2" width="2.6" height="2.6" fill="#6a6a6a"/><rect x="1.0" y="1.5" width="2.6" height="2.6" fill="#151515"/><rect x="1.5" y="9" width="2.6" height="2.6" fill="#6a6a6a"/><rect x="1.0" y="8.5" width="2.6" height="2.6" fill="#151515"/><rect x="7.8" y="2" width="2.6" height="2.6" fill="#6a6a6a"/><rect x="7.3" y="1.5" width="2.6" height="2.6" fill="#151515"/><rect x="7.8" y="9" width="2.6" height="2.6" fill="#6a6a6a"/><rect x="7.3" y="8.5" width="2.6" height="2.6" fill="#151515"/><rect x="14.1" y="2" width="2.6" height="2.6" fill="#6a6a6a"/><rect x="13.6" y="1.5" width="2.6" height="2.6" fill="#151515"/><rect x="14.1" y="9" width="2.6" height="2.6" fill="#6a6a6a"/><rect x="13.6" y="8.5" width="2.6" height="2.6" fill="#151515"/><rect x="20.4" y="2" width="2.6" height="2.6" fill="#6a6a6a"/><rect x="19.9" y="1.5" width="2.6" height="2.6" fill="#151515"/><rect x="20.4" y="9" width="2.6" height="2.6" fill="#6a6a6a"/><rect x="19.9" y="8.5" width="2.6" height="2.6" fill="#151515"/></svg>
<div class="t" style="left:3116px;top:367.5px;font-size:23px;color:#d0d0d0;font-weight:normal;text-shadow:0 1.5px 1.5px rgba(0,0,0,0.6);">Location:</div>
<div class="a" style="left:3116px;top:401px;width:252px;height:36px;background:#467a2b;border-radius:8px 8px 0px 0px;"></div>
<div class="t" style="left:3147px;top:407.8px;font-size:23px;color:#e6e6e6;font-weight:normal;text-shadow:0 1.5px 1.5px rgba(0,0,0,0.6);">X</div>
<div class="t" style="right:1014px;top:407.8px;font-size:23px;color:#e6e6e6;font-weight:normal;text-align:right;text-shadow:0 1.5px 1.5px rgba(0,0,0,0.6);letter-spacing:0.7px;">0 m</div>
<svg class="a" style="left:3404px;top:404.0px;" width="30" height="30" viewBox="0 0 30 30"><path d="M1.6 14.5 V11 A6.6 6.6 0 0 1 14.6 9.6" fill="none" stroke="#a8a8a8" stroke-width="2.1"/><rect x="11.2" y="14" width="16.6" height="10.4" fill="none" stroke="#a8a8a8" stroke-width="2.1"/><rect x="18.2" y="17.6" width="2.6" height="3.2" fill="#a8a8a8"/></svg>
<div class="a" style="left:3116px;top:439px;width:252px;height:38px;background:#467a2b;border-radius:0px 0px 0px 0px;"></div>
<div class="t" style="left:3147px;top:446.8px;font-size:23px;color:#e6e6e6;font-weight:normal;text-shadow:0 1.5px 1.5px rgba(0,0,0,0.6);">Y</div>
<div class="t" style="right:1014px;top:446.8px;font-size:23px;color:#e6e6e6;font-weight:normal;text-align:right;text-shadow:0 1.5px 1.5px rgba(0,0,0,0.6);letter-spacing:0.7px;">0 m</div>
<svg class="a" style="left:3404px;top:443.0px;" width="30" height="30" viewBox="0 0 30 30"><path d="M1.6 14.5 V11 A6.6 6.6 0 0 1 14.6 9.6" fill="none" stroke="#a8a8a8" stroke-width="2.1"/><rect x="11.2" y="14" width="16.6" height="10.4" fill="none" stroke="#a8a8a8" stroke-width="2.1"/><rect x="18.2" y="17.6" width="2.6" height="3.2" fill="#a8a8a8"/></svg>
<div class="a" style="left:3116px;top:479px;width:252px;height:38px;background:#467a2b;border-radius:0px 0px 8px 8px;box-shadow:0 2px 1px #2a2a2a;"></div>
<div class="t" style="left:3147px;top:486.8px;font-size:23px;color:#e6e6e6;font-weight:normal;text-shadow:0 1.5px 1.5px rgba(0,0,0,0.6);">Z</div>
<div class="t" style="right:1014px;top:486.8px;font-size:23px;color:#e6e6e6;font-weight:normal;text-align:right;text-shadow:0 1.5px 1.5px rgba(0,0,0,0.6);letter-spacing:0.7px;">0.70121 m</div>
<svg class="a" style="left:3404px;top:483.0px;" width="30" height="30" viewBox="0 0 30 30"><path d="M1.6 14.5 V11 A6.6 6.6 0 0 1 14.6 9.6" fill="none" stroke="#a8a8a8" stroke-width="2.1"/><rect x="11.2" y="14" width="16.6" height="10.4" fill="none" stroke="#a8a8a8" stroke-width="2.1"/><rect x="18.2" y="17.6" width="2.6" height="3.2" fill="#a8a8a8"/></svg>
<div class="t" style="left:3116px;top:531.5px;font-size:23px;color:#d0d0d0;font-weight:normal;text-shadow:0 1.5px 1.5px rgba(0,0,0,0.6);">Rotation:</div>
<div class="a" style="left:3116px;top:565px;width:252px;height:36px;background:#467a2b;border-radius:8px 8px 0px 0px;"></div>
<div class="t" style="left:3147px;top:571.8px;font-size:23px;color:#e6e6e6;font-weight:normal;text-shadow:0 1.5px 1.5px rgba(0,0,0,0.6);">X</div>
<div class="t" style="right:1014px;top:571.8px;font-size:23px;color:#e6e6e6;font-weight:normal;text-align:right;text-shadow:0 1.5px 1.5px rgba(0,0,0,0.6);letter-spacing:0.7px;">17.862°</div>
<svg class="a" style="left:3404px;top:568.0px;" width="30" height="30" viewBox="0 0 30 30"><path d="M1.6 14.5 V11 A6.6 6.6 0 0 1 14.6 9.6" fill="none" stroke="#a8a8a8" stroke-width="2.1"/><rect x="11.2" y="14" width="16.6" height="10.4" fill="none" stroke="#a8a8a8" stroke-width="2.1"/><rect x="18.2" y="17.6" width="2.6" height="3.2" fill="#a8a8a8"/></svg>
<div class="a" style="left:3116px;top:603px;width:252px;height:38px;background:#467a2b;border-radius:0px 0px 0px 0px;"></div>
<div class="t" style="left:3147px;top:610.8px;font-size:23px;color:#e6e6e6;font-weight:normal;text-shadow:0 1.5px 1.5px rgba(0,0,0,0.6);">Y</div>
<div class="t" style="right:1014px;top:610.8px;font-size:23px;color:#e6e6e6;font-weight:normal;text-align:right;text-shadow:0 1.5px 1.5px rgba(0,0,0,0.6);letter-spacing:0.7px;">0°</div>
<svg class="a" style="left:3404px;top:607.0px;" width="30" height="30" viewBox="0 0 30 30"><path d="M1.6 14.5 V11 A6.6 6.6 0 0 1 14.6 9.6" fill="none" stroke="#a8a8a8" stroke-width="2.1"/><rect x="11.2" y="14" width="16.6" height="10.4" fill="none" stroke="#a8a8a8" stroke-width="2.1"/><rect x="18.2" y="17.6" width="2.6" height="3.2" fill="#a8a8a8"/></svg>
<div class="a" style="left:3116px;top:643px;width:252px;height:38px;background:#467a2b;border-radius:0px 0px 8px 8px;box-shadow:0 2px 1px #2a2a2a;"></div>
<div class="t" style="left:3147px;top:650.8px;font-size:23px;color:#e6e6e6;font-weight:normal;text-shadow:0 1.5px 1.5px rgba(0,0,0,0.6);">Z</div>
<div class="t" style="right:1014px;top:650.8px;font-size:23px;color:#e6e6e6;font-weight:normal;text-align:right;text-shadow:0 1.5px 1.5px rgba(0,0,0,0.6);letter-spacing:0.7px;">0°</div>
<svg class="a" style="left:3404px;top:647.0px;" width="30" height="30" viewBox="0 0 30 30"><path d="M1.6 14.5 V11 A6.6 6.6 0 0 1 14.6 9.6" fill="none" stroke="#a8a8a8" stroke-width="2.1"/><rect x="11.2" y="14" width="16.6" height="10.4" fill="none" stroke="#a8a8a8" stroke-width="2.1"/><rect x="18.2" y="17.6" width="2.6" height="3.2" fill="#a8a8a8"/></svg>
<div class="a" style="left:3116px;top:689px;width:333px;height:36px;background:#282828;border-radius:8px;box-shadow:0 2px 1px #2a2a2a;"></div>
<div class="t" style="left:3130px;top:696.5px;font-size:23px;color:#e6e6e6;font-weight:normal;text-shadow:0 1.5px 1.5px rgba(0,0,0,0.6);">XYZ Euler</div>
<svg class="a" style="left:3429px;top:702px;" width="16" height="12" viewBox="0 0 16 12"><path d="M2 3.5999999999999996 L8 8.7 L14 3.5999999999999996" fill="none" stroke="#d0d0d0" stroke-width="2"/></svg>
<div class="t" style="left:3116px;top:739.5px;font-size:23px;color:#d0d0d0;font-weight:normal;text-shadow:0 1.5px 1.5px rgba(0,0,0,0.6);">Scale:</div>
<div class="a" style="left:3116px;top:774px;width:252px;height:35px;background:#545454;border-radius:8px 8px 0px 0px;"></div>
<div class="t" style="left:3147px;top:780.3px;font-size:23px;color:#e6e6e6;font-weight:normal;text-shadow:0 1.5px 1.5px rgba(0,0,0,0.6);">X</div>
<div class="t" style="right:1014px;top:780.3px;font-size:23px;color:#e6e6e6;font-weight:normal;text-align:right;text-shadow:0 1.5px 1.5px rgba(0,0,0,0.6);letter-spacing:0.7px;">1.520</div>
<svg class="a" style="left:3404px;top:776.5px;" width="30" height="30" viewBox="0 0 30 30"><path d="M1.6 14.5 V11 A6.6 6.6 0 0 1 14.6 9.6" fill="none" stroke="#a8a8a8" stroke-width="2.1"/><rect x="11.2" y="14" width="16.6" height="10.4" fill="none" stroke="#a8a8a8" stroke-width="2.1"/><rect x="18.2" y="17.6" width="2.6" height="3.2" fill="#a8a8a8"/></svg>
<div class="a" style="left:3116px;top:811px;width:252px;height:38px;background:#545454;border-radius:0px 0px 0px 0px;"></div>
<div class="t" style="left:3147px;top:818.8px;font-size:23px;color:#e6e6e6;font-weight:normal;text-shadow:0 1.5px 1.5px rgba(0,0,0,0.6);">Y</div>
<div class="t" style="right:1014px;top:818.8px;font-size:23px;color:#e6e6e6;font-weight:normal;text-align:right;text-shadow:0 1.5px 1.5px rgba(0,0,0,0.6);letter-spacing:0.7px;">1.020</div>
<svg class="a" style="left:3404px;top:815.0px;" width="30" height="30" viewBox="0 0 30 30"><path d="M1.6 14.5 V11 A6.6 6.6 0 0 1 14.6 9.6" fill="none" stroke="#a8a8a8" stroke-width="2.1"/><rect x="11.2" y="14" width="16.6" height="10.4" fill="none" stroke="#a8a8a8" stroke-width="2.1"/><rect x="18.2" y="17.6" width="2.6" height="3.2" fill="#a8a8a8"/></svg>
<div class="a" style="left:3116px;top:851px;width:252px;height:38px;background:#545454;border-radius:0px 0px 8px 8px;box-shadow:0 2px 1px #2a2a2a;"></div>
<div class="t" style="left:3147px;top:858.8px;font-size:23px;color:#e6e6e6;font-weight:normal;text-shadow:0 1.5px 1.5px rgba(0,0,0,0.6);">Z</div>
<div class="t" style="right:1014px;top:858.8px;font-size:23px;color:#e6e6e6;font-weight:normal;text-align:right;text-shadow:0 1.5px 1.5px rgba(0,0,0,0.6);letter-spacing:0.7px;">0.100</div>
<svg class="a" style="left:3404px;top:855.0px;" width="30" height="30" viewBox="0 0 30 30"><path d="M1.6 14.5 V11 A6.6 6.6 0 0 1 14.6 9.6" fill="none" stroke="#a8a8a8" stroke-width="2.1"/><rect x="11.2" y="14" width="16.6" height="10.4" fill="none" stroke="#a8a8a8" stroke-width="2.1"/><rect x="18.2" y="17.6" width="2.6" height="3.2" fill="#a8a8a8"/></svg>
<div class="t" style="left:3116px;top:903.5px;font-size:23px;color:#d0d0d0;font-weight:normal;text-shadow:0 1.5px 1.5px rgba(0,0,0,0.6);">Dimensions:</div>
<div class="a" style="left:3116px;top:938px;width:333px;height:37px;background:#545454;border-radius:8px 8px 0px 0px;"></div>
<div class="t" style="left:3147px;top:945.3px;font-size:23px;color:#e6e6e6;font-weight:normal;text-shadow:0 1.5px 1.5px rgba(0,0,0,0.6);">X</div>
<div class="t" style="right:933px;top:945.3px;font-size:23px;color:#e6e6e6;font-weight:normal;text-align:right;text-shadow:0 1.5px 1.5px rgba(0,0,0,0.6);letter-spacing:0.7px;">0.282 m</div>
<div class="a" style="left:3116px;top:977px;width:333px;height:36px;background:#545454;border-radius:0px 0px 0px 0px;"></div>
<div class="t" style="left:3147px;top:983.8px;font-size:23px;color:#e6e6e6;font-weight:normal;text-shadow:0 1.5px 1.5px rgba(0,0,0,0.6);">Y</div>
<div class="t" style="right:933px;top:983.8px;font-size:23px;color:#e6e6e6;font-weight:normal;text-align:right;text-shadow:0 1.5px 1.5px rgba(0,0,0,0.6);letter-spacing:0.7px;">0.189 m</div>
<div class="a" style="left:3116px;top:1015px;width:333px;height:38px;background:#545454;border-radius:0px 0px 8px 8px;box-shadow:0 2px 1px #2a2a2a;"></div>
<div class="t" style="left:3147px;top:1022.8px;font-size:23px;color:#e6e6e6;font-weight:normal;text-shadow:0 1.5px 1.5px rgba(0,0,0,0.6);">Z</div>
<div class="t" style="right:933px;top:1022.8px;font-size:23px;color:#e6e6e6;font-weight:normal;text-align:right;text-shadow:0 1.5px 1.5px rgba(0,0,0,0.6);letter-spacing:0.7px;">0.0184 m</div>
<div class="a" style="left:3482px;top:289px;width:39px;height:1744px;background:#1a1a1a;"></div>
<div class="a" style="left:3482px;top:299px;width:37px;height:80px;background:#2c2c2c;border-radius:0 8px 8px 0;box-shadow:inset -1px 0 0 #3a3a3a, inset 0 1px 0 #3a3a3a, inset 0 -1px 0 #3a3a3a;"></div>
<div class="t" style="left:3400px;top:327.5px;width:200px;text-align:center;font-size:23px;color:#dcdcdc;transform:rotate(90deg);">Item</div>
<div class="a" style="left:3482px;top:389px;width:37px;height:75px;background:#2c2c2c;border-radius:0 8px 8px 0;box-shadow:inset -1px 0 0 #3a3a3a, inset 0 1px 0 #3a3a3a, inset 0 -1px 0 #3a3a3a;"></div>
<div class="t" style="left:3400px;top:415.0px;width:200px;text-align:center;font-size:23px;color:#dcdcdc;transform:rotate(90deg);">Tool</div>
<div class="a" style="left:3482px;top:474px;width:37px;height:82px;background:#2c2c2c;border-radius:0 8px 8px 0;box-shadow:inset -1px 0 0 #3a3a3a, inset 0 1px 0 #3a3a3a, inset 0 -1px 0 #3a3a3a;"></div>
<div class="t" style="left:3400px;top:503.5px;width:200px;text-align:center;font-size:23px;color:#dcdcdc;transform:rotate(90deg);">View</div>
<div class="a" style="left:3482px;top:566px;width:37px;height:68px;background:#2c2c2c;border-radius:0 8px 8px 0;box-shadow:inset -1px 0 0 #3a3a3a, inset 0 1px 0 #3a3a3a, inset 0 -1px 0 #3a3a3a;"></div>
<div class="t" style="left:3400px;top:588.5px;width:200px;text-align:center;font-size:23px;color:#dcdcdc;transform:rotate(90deg);">Edit</div>
<div class="a" style="left:113px;top:2041px;width:3408px;height:580px;background:#313131;border-radius:12px;overflow:hidden;"></div>
<div class="a" style="left:113px;top:2041px;width:3408px;height:50px;background:#303030;border-radius:12px 12px 0 0;"></div>
<div class="a" style="left:113px;top:2091px;width:3408px;height:46px;background:#1c1c1c;"></div>
<div class="a" style="left:113px;top:2137px;width:130px;height:484px;background:#212121;"></div>
<svg class="a" style="left:0;top:0" width="4356" height="2812"><path d="M171.9 2137 V2621" stroke="#272727" stroke-width="2"/><path d="M231.8 2137 V2621" stroke="#161616" stroke-width="2"/><path d="M291.8 2137 V2621" stroke="#272727" stroke-width="2"/><path d="M351.7 2137 V2621" stroke="#161616" stroke-width="2"/><path d="M411.6 2137 V2621" stroke="#272727" stroke-width="2"/><path d="M471.6 2137 V2621" stroke="#161616" stroke-width="2"/><path d="M531.5 2137 V2621" stroke="#272727" stroke-width="2"/><path d="M591.5 2137 V2621" stroke="#161616" stroke-width="2"/><path d="M651.5 2137 V2621" stroke="#272727" stroke-width="2"/><path d="M711.4 2137 V2621" stroke="#161616" stroke-width="2"/><path d="M771.3 2137 V2621" stroke="#272727" stroke-width="2"/><path d="M831.3 2137 V2621" stroke="#161616" stroke-width="2"/><path d="M891.2 2137 V2621" stroke="#272727" stroke-width="2"/><path d="M951.2 2137 V2621" stroke="#161616" stroke-width="2"/><path d="M1011.2 2137 V2621" stroke="#272727" stroke-width="2"/><path d="M1071.1 2137 V2621" stroke="#161616" stroke-width="2"/><path d="M1131.0 2137 V2621" stroke="#272727" stroke-width="2"/><path d="M1191.0 2137 V2621" stroke="#161616" stroke-width="2"/><path d="M1251.0 2137 V2621" stroke="#272727" stroke-width="2"/><path d="M1310.9 2137 V2621" stroke="#161616" stroke-width="2"/><path d="M1370.8 2137 V2621" stroke="#272727" stroke-width="2"/><path d="M1430.8 2137 V2621" stroke="#161616" stroke-width="2"/><path d="M1490.8 2137 V2621" stroke="#272727" stroke-width="2"/><path d="M1550.7 2137 V2621" stroke="#161616" stroke-width="2"/><path d="M1610.7 2137 V2621" stroke="#272727" stroke-width="2"/><path d="M1670.6 2137 V2621" stroke="#161616" stroke-width="2"/><path d="M1730.5 2137 V2621" stroke="#272727" stroke-width="2"/><path d="M1790.5 2137 V2621" stroke="#161616" stroke-width="2"/><path d="M1850.5 2137 V2621" stroke="#272727" stroke-width="2"/><path d="M1910.4 2137 V2621" stroke="#161616" stroke-width="2"/><path d="M1970.3 2137 V2621" stroke="#272727" stroke-width="2"/><path d="M2030.3 2137 V2621" stroke="#161616" stroke-width="2"/><path d="M2090.2 2137 V2621" stroke="#272727" stroke-width="2"/><path d="M2150.2 2137 V2621" stroke="#161616" stroke-width="2"/><path d="M2210.2 2137 V2621" stroke="#272727" stroke-width="2"/><path d="M2270.1 2137 V2621" stroke="#161616" stroke-width="2"/><path d="M2330.1 2137 V2621" stroke="#272727" stroke-width="2"/><path d="M2390.0 2137 V2621" stroke="#161616" stroke-width="2"/><path d="M2450.0 2137 V2621" stroke="#272727" stroke-width="2"/><path d="M2509.9 2137 V2621" stroke="#161616" stroke-width="2"/><path d="M2569.9 2137 V2621" stroke="#272727" stroke-width="2"/><path d="M2629.8 2137 V2621" stroke="#161616" stroke-width="2"/><path d="M2689.8 2137 V2621" stroke="#272727" stroke-width="2"/><path d="M2749.7 2137 V2621" stroke="#161616" stroke-width="2"/><path d="M2809.7 2137 V2621" stroke="#272727" stroke-width="2"/><path d="M2869.6 2137 V2621" stroke="#161616" stroke-width="2"/><path d="M2929.6 2137 V2621" stroke="#272727" stroke-width="2"/><path d="M2989.5 2137 V2621" stroke="#161616" stroke-width="2"/><path d="M3049.5 2137 V2621" stroke="#272727" stroke-width="2"/><path d="M3109.4 2137 V2621" stroke="#161616" stroke-width="2"/><path d="M3169.4 2137 V2621" stroke="#272727" stroke-width="2"/><path d="M3229.3 2137 V2621" stroke="#161616" stroke-width="2"/><path d="M3289.3 2137 V2621" stroke="#272727" stroke-width="2"/><path d="M3349.2 2137 V2621" stroke="#161616" stroke-width="2"/><path d="M3409.2 2137 V2621" stroke="#272727" stroke-width="2"/><path d="M3469.1 2137 V2621" stroke="#161616" stroke-width="2"/><path d="M243.8 2137 V2621" stroke="#0a0a0a" stroke-width="2.4"/></svg>
<div class="t" style="left:-268.2px;width:1000px;text-align:center;top:2102.5px;font-size:23px;color:#aaaaaa;font-weight:normal;letter-spacing:0.7px;">0</div>
<div class="t" style="left:-148.29999999999995px;width:1000px;text-align:center;top:2102.5px;font-size:23px;color:#aaaaaa;font-weight:normal;letter-spacing:0.7px;">10</div>
<div class="t" style="left:-28.399999999999977px;width:1000px;text-align:center;top:2102.5px;font-size:23px;color:#aaaaaa;font-weight:normal;letter-spacing:0.7px;">20</div>
<div class="t" style="left:91.5px;width:1000px;text-align:center;top:2102.5px;font-size:23px;color:#aaaaaa;font-weight:normal;letter-spacing:0.7px;">30</div>
<div class="t" style="left:211.4000000000001px;width:1000px;text-align:center;top:2102.5px;font-size:23px;color:#aaaaaa;font-weight:normal;letter-spacing:0.7px;">40</div>
<div class="t" style="left:331.29999999999995px;width:1000px;text-align:center;top:2102.5px;font-size:23px;color:#aaaaaa;font-weight:normal;letter-spacing:0.7px;">50</div>
<div class="t" style="left:451.20000000000005px;width:1000px;text-align:center;top:2102.5px;font-size:23px;color:#aaaaaa;font-weight:normal;letter-spacing:0.7px;">60</div>
<div class="t" style="left:571.1000000000001px;width:1000px;text-align:center;top:2102.5px;font-size:23px;color:#aaaaaa;font-weight:normal;letter-spacing:0.7px;">70</div>
<div class="t" style="left:691.0px;width:1000px;text-align:center;top:2102.5px;font-size:23px;color:#aaaaaa;font-weight:normal;letter-spacing:0.7px;">80</div>
<div class="t" style="left:810.8999999999999px;width:1000px;text-align:center;top:2102.5px;font-size:23px;color:#aaaaaa;font-weight:normal;letter-spacing:0.7px;">90</div>
<div class="t" style="left:930.8px;width:1000px;text-align:center;top:2102.5px;font-size:23px;color:#aaaaaa;font-weight:normal;letter-spacing:0.7px;">100</div>
<div class="t" style="left:1050.7px;width:1000px;text-align:center;top:2102.5px;font-size:23px;color:#aaaaaa;font-weight:normal;letter-spacing:0.7px;">110</div>
<div class="t" style="left:1170.6px;width:1000px;text-align:center;top:2102.5px;font-size:23px;color:#aaaaaa;font-weight:normal;letter-spacing:0.7px;">120</div>
<div class="t" style="left:1290.5px;width:1000px;text-align:center;top:2102.5px;font-size:23px;color:#aaaaaa;font-weight:normal;letter-spacing:0.7px;">130</div>
<div class="t" style="left:1410.4px;width:1000px;text-align:center;top:2102.5px;font-size:23px;color:#aaaaaa;font-weight:normal;letter-spacing:0.7px;">14</div>
<div class="t" style="left:1530.3px;width:1000px;text-align:center;top:2102.5px;font-size:23px;color:#aaaaaa;font-weight:normal;letter-spacing:0.7px;">150</div>
<div class="t" style="left:1650.2000000000003px;width:1000px;text-align:center;top:2102.5px;font-size:23px;color:#aaaaaa;font-weight:normal;letter-spacing:0.7px;">160</div>
<div class="t" style="left:1770.1px;width:1000px;text-align:center;top:2102.5px;font-size:23px;color:#aaaaaa;font-weight:normal;letter-spacing:0.7px;">170</div>
<div class="t" style="left:1890.0px;width:1000px;text-align:center;top:2102.5px;font-size:23px;color:#aaaaaa;font-weight:normal;letter-spacing:0.7px;">180</div>
<div class="t" style="left:2009.9px;width:1000px;text-align:center;top:2102.5px;font-size:23px;color:#aaaaaa;font-weight:normal;letter-spacing:0.7px;">190</div>
<div class="t" style="left:2129.8px;width:1000px;text-align:center;top:2102.5px;font-size:23px;color:#aaaaaa;font-weight:normal;letter-spacing:0.7px;">200</div>
<div class="t" style="left:2249.7000000000003px;width:1000px;text-align:center;top:2102.5px;font-size:23px;color:#aaaaaa;font-weight:normal;letter-spacing:0.7px;">210</div>
<div class="t" style="left:2369.6000000000004px;width:1000px;text-align:center;top:2102.5px;font-size:23px;color:#aaaaaa;font-weight:normal;letter-spacing:0.7px;">220</div>
<div class="t" style="left:2489.5000000000005px;width:1000px;text-align:center;top:2102.5px;font-size:23px;color:#aaaaaa;font-weight:normal;letter-spacing:0.7px;">230</div>
<div class="t" style="left:2609.4px;width:1000px;text-align:center;top:2102.5px;font-size:23px;color:#aaaaaa;font-weight:normal;letter-spacing:0.7px;">240</div>
<div class="t" style="left:2729.3px;width:1000px;text-align:center;top:2102.5px;font-size:23px;color:#aaaaaa;font-weight:normal;letter-spacing:0.7px;">250</div>
<div class="t" style="left:2849.2000000000003px;width:1000px;text-align:center;top:2102.5px;font-size:23px;color:#aaaaaa;font-weight:normal;letter-spacing:0.7px;">260</div>
<div class="t" style="left:2969.1000000000004px;width:1000px;text-align:center;top:2102.5px;font-size:23px;color:#aaaaaa;font-weight:normal;letter-spacing:0.7px;">270</div>
<div class="a" style="left:2150px;top:2147px;width:1370px;height:19px;background:#484848;"></div>
<svg class="a" style="left:231.79000000000002px;top:2145px;" width="24" height="24" viewBox="0 0 24 24"><path d="M12 1 L23 12 L12 23 L1 12 Z" fill="#d8d8d8" stroke="#111" stroke-width="1.5"/></svg>
<svg class="a" style="left:1418.8px;top:2145px;" width="24" height="24" viewBox="0 0 24 24"><path d="M12 1 L23 12 L12 23 L1 12 Z" fill="#d8d8d8" stroke="#111" stroke-width="1.5"/></svg>
<svg class="a" style="left:2138.2000000000003px;top:2145px;" width="24" height="24" viewBox="0 0 24 24"><path d="M12 1 L23 12 L12 23 L1 12 Z" fill="#d8d8d8" stroke="#111" stroke-width="1.5"/></svg>
<div class="a" style="left:1944.5px;top:2100px;width:3px;height:521px;background:#4772b3;"></div>
<div class="a" style="left:1918px;top:2098px;width:57px;height:33px;background:#4772b3;border-radius:7px;"></div>
<div class="t" style="left:1446px;width:1000px;text-align:center;top:2102.5px;font-size:23px;color:#ffffff;font-weight:normal;letter-spacing:0.7px;">143</div>
<div class="a" style="left:129px;top:2048px;width:62px;height:37px;background:#282828;border-radius:8px;box-shadow:inset 0 0 0 2px #393939, 0 1px 1px #161616;"></div>
<svg class="a" style="left:136px;top:2051px;" width="30" height="30" viewBox="0 0 30 30"><circle cx="14" cy="15" r="13" fill="#e8e8e8"/><path d="M16 7 L10 15 L16 23" fill="none" stroke="#282828" stroke-width="3.4"/></svg>
<svg class="a" style="left:170px;top:2061px;" width="16" height="12" viewBox="0 0 16 12"><path d="M2 3.5999999999999996 L8 8.7 L14 3.5999999999999996" fill="none" stroke="#d0d0d0" stroke-width="2"/></svg>
<div class="a" style="left:203px;top:2048px;width:262px;height:37px;background:#282828;border-radius:8px;box-shadow:inset 0 0 0 2px #393939, 0 1px 1px #161616;"></div>
<div class="a" style="left:345px;top:2048px;width:1px;height:37px;background:#3a3a3a;"></div>
<div class="t" style="left:218px;top:2054.5px;font-size:23px;color:#e0e0e0;font-weight:normal;">Playback</div>
<svg class="a" style="left:324px;top:2061px;" width="16" height="12" viewBox="0 0 16 12"><path d="M2 3.5999999999999996 L8 8.7 L14 3.5999999999999996" fill="none" stroke="#d0d0d0" stroke-width="2"/></svg>
<div class="t" style="left:360px;top:2054.5px;font-size:23px;color:#e0e0e0;font-weight:normal;">Keying</div>
<svg class="a" style="left:444px;top:2061px;" width="16" height="12" viewBox="0 0 16 12"><path d="M2 3.5999999999999996 L8 8.7 L14 3.5999999999999996" fill="none" stroke="#d0d0d0" stroke-width="2"/></svg>
<div class="t" style="left:485px;top:2054.5px;font-size:23px;color:#dcdcdc;font-weight:normal;">View</div>
<div class="t" style="left:566px;top:2054.5px;font-size:23px;color:#dcdcdc;font-weight:normal;">Marker</div>
<div class="a" style="left:1631px;top:2048px;width:77px;height:37px;background:#282828;border-radius:8px;box-shadow:inset 0 0 0 2px #393939, 0 1px 1px #161616;"></div>
<div class="a" style="left:1631px;top:2048px;width:40px;height:37px;background:#545454;border-radius:8px 0 0 8px;"></div>
<svg class="a" style="left:1640px;top:2056px;" width="22" height="22" viewBox="0 0 22 22"><circle cx="11" cy="11" r="8" fill="#e8e8e8"/></svg>
<svg class="a" style="left:1682px;top:2062px;" width="14" height="10" viewBox="0 0 14 10"><path d="M2 3.0 L7 7.25 L12 3.0" fill="none" stroke="#7a7a7a" stroke-width="1.6"/></svg>
<div class="a" style="left:1722px;top:2048px;width:237px;height:37px;background:#4e4e4e;border-radius:8px;box-shadow:inset 0 0 0 2px #393939, 0 1px 1px #161616;"></div>
<div class="a" style="left:1761.5px;top:2048px;width:1.5px;height:37px;background:#404040;"></div>
<div class="a" style="left:1801.0px;top:2048px;width:1.5px;height:37px;background:#404040;"></div>
<div class="a" style="left:1840.5px;top:2048px;width:1.5px;height:37px;background:#404040;"></div>
<div class="a" style="left:1880.0px;top:2048px;width:1.5px;height:37px;background:#404040;"></div>
<div class="a" style="left:1919.5px;top:2048px;width:1.5px;height:37px;background:#404040;"></div>
<svg class="a" style="left:1729.0px;top:2053px;" width="26" height="26" viewBox="0 0 26 26"><path d="M4 4 V22 M22 4 L8 13 L22 22 Z" stroke="#e8e8e8" stroke-width="2.6" fill="#e8e8e8"/></svg>
<svg class="a" style="left:1768.5px;top:2053px;" width="26" height="26" viewBox="0 0 26 26"><path d="M1 13 L8 5 L15 13 L8 21 Z M26 5 L16 13 L26 21 Z" fill="#e8e8e8"/></svg>
<svg class="a" style="left:1808.0px;top:2053px;" width="26" height="26" viewBox="0 0 26 26"><path d="M22 4 L6 13 L22 22 Z" fill="#e8e8e8"/></svg>
<svg class="a" style="left:1847.5px;top:2053px;" width="26" height="26" viewBox="0 0 26 26"><path d="M6 4 L22 13 L6 22 Z" fill="#e8e8e8"/></svg>
<svg class="a" style="left:1887.0px;top:2053px;" width="26" height="26" viewBox="0 0 26 26"><path d="M25 13 L18 5 L11 13 L18 21 Z M0 5 L10 13 L0 21 Z" fill="#e8e8e8"/></svg>
<svg class="a" style="left:1926.5px;top:2053px;" width="26" height="26" viewBox="0 0 26 26"><path d="M22 4 V22 M4 4 L18 13 L4 22 Z" stroke="#e8e8e8" stroke-width="2.6" fill="#e8e8e8"/></svg>
<div class="a" style="left:2958px;top:2048px;width:148px;height:37px;background:#545454;border-radius:8px;"></div>
<div class="t" style="left:2532px;width:1000px;text-align:center;top:2054.5px;font-size:23px;color:#e6e6e6;font-weight:normal;letter-spacing:0.7px;">143</div>
<div class="a" style="left:3118px;top:2048px;width:388px;height:37px;background:#545454;border-radius:8px;"></div>
<div class="a" style="left:3118px;top:2048px;width:40px;height:37px;background:#4a4a4a;border-radius:8px 0 0 8px;"></div>
<div class="a" style="left:3335px;top:2048px;width:2px;height:37px;background:#3d3d3d;"></div>
<svg class="a" style="left:3124px;top:2051px;" width="30" height="30" viewBox="0 0 30 30"><circle cx="15" cy="17" r="10" fill="none" stroke="#e0e0e0" stroke-width="2.2"/><path d="M15 17 V10 M11 4 H19 M15 4 V7" stroke="#e0e0e0" stroke-width="2.2"/></svg>
<div class="t" style="left:3189px;top:2054.5px;font-size:23px;color:#e6e6e6;font-weight:normal;">Start</div>
<div class="t" style="right:1048px;top:2054.5px;font-size:23px;color:#e6e6e6;font-weight:normal;text-align:right;letter-spacing:0.7px;">1</div>
<div class="t" style="left:3367px;top:2054.5px;font-size:23px;color:#e6e6e6;font-weight:normal;">End</div>
<div class="t" style="right:876px;top:2054.5px;font-size:23px;color:#e6e6e6;font-weight:normal;text-align:right;letter-spacing:0.7px;">600</div>
<div class="a" style="left:130px;top:2600.5px;width:1540px;height:16px;background:#545454;border-radius:8px;"></div>
<div class="a" style="left:132.5px;top:2602.5px;width:12px;height:12px;background:#2c2c2c;border-radius:6px;"></div>
<div class="a" style="left:1655.5px;top:2602.5px;width:12px;height:12px;background:#2c2c2c;border-radius:6px;"></div>
<div class="a" style="left:3510px;top:2140px;width:6px;height:480px;background:#3a3a3a;border-radius:3px;"></div>
<svg class="a" style="left:113px;top:2120px;" width="14" height="20" viewBox="0 0 14 20"><path d="M3 3 L10 10 L3 17" fill="none" stroke="#888" stroke-width="2"/></svg>
<svg class="a" style="left:3505px;top:2122px;" width="14" height="20" viewBox="0 0 14 20"><path d="M10 3 L3 10 L10 17" fill="none" stroke="#888" stroke-width="2"/></svg>
<svg class="a" style="left:136px;top:2629px;" width="22" height="32" viewBox="0 0 22 32"><rect x="1.5" y="1.5" width="19" height="28" rx="6" fill="none" stroke="#9a9a9a" stroke-width="2.2"/><path d="M3 14 V8 Q3 3 9 3 H10.5 V14 Z" fill="#9a9a9a"/></svg>
<div class="t" style="left:180px;top:2632.5px;font-size:23px;color:#9c9c9c;font-weight:normal;">Select (Toggle)</div>
<svg class="a" style="left:558px;top:2629px;" width="22" height="32" viewBox="0 0 22 32"><rect x="1.5" y="1.5" width="19" height="28" rx="6" fill="none" stroke="#9a9a9a" stroke-width="2.2"/><rect x="8.5" y="5" width="5" height="10" rx="1.5" fill="#9a9a9a"/></svg>
<div class="t" style="left:602px;top:2632.5px;font-size:23px;color:#9c9c9c;font-weight:normal;">Dolly View</div>
<svg class="a" style="left:980px;top:2629px;" width="22" height="32" viewBox="0 0 22 32"><rect x="1.5" y="1.5" width="19" height="28" rx="6" fill="none" stroke="#9a9a9a" stroke-width="2.2"/><path d="M19 14 V8 Q19 3 13 3 H11.5 V14 Z" fill="#9a9a9a"/></svg>
<div class="t" style="left:1024px;top:2632.5px;font-size:23px;color:#9c9c9c;font-weight:normal;">Lasso Select</div>
<div class="t" style="right:136px;top:2632.5px;font-size:23px;color:#9c9c9c;font-weight:normal;text-align:right;letter-spacing:0.7px;">4.0.2</div>
<div class="a" style="left:3528px;top:186px;width:714px;height:778px;background:#282828;border-radius:14px;overflow:hidden;"></div>
<div class="a" style="left:3528px;top:186px;width:714px;height:54px;background:#2a2a2a;border-radius:14px 14px 0 0;"></div>
<div class="a" style="left:3544px;top:192px;width:62px;height:38px;background:#282828;border-radius:8px;box-shadow:inset 0 0 0 2px #393939, 0 1px 1px #161616;"></div>
<svg class="a" style="left:3550px;top:196px;" width="34" height="30" viewBox="0 0 34 30"><rect x="2" y="2" width="9" height="6" fill="#d8d8d8"/><rect x="14" y="13" width="14" height="6" fill="#d8d8d8"/><rect x="14" y="22" width="14" height="6" fill="#d8d8d8"/><path d="M6 8 V25 H12 M6 16 H12" fill="none" stroke="#d8d8d8" stroke-width="2"/></svg>
<svg class="a" style="left:3586px;top:206px;" width="16" height="12" viewBox="0 0 16 12"><path d="M2 3.5999999999999996 L8 8.7 L14 3.5999999999999996" fill="none" stroke="#d0d0d0" stroke-width="2"/></svg>
<div class="a" style="left:3618px;top:192px;width:62px;height:38px;background:#282828;border-radius:8px;box-shadow:inset 0 0 0 2px #393939, 0 1px 1px #161616;"></div>
<svg class="a" style="left:3624px;top:196px;" width="32" height="30" viewBox="0 0 32 30"><rect x="8" y="2" width="21" height="19" fill="none" stroke="#dcdcdc" stroke-width="2.4"/><path d="M8 21 L16 11 L21 16 L24 13 L29 19" fill="#dcdcdc"/><circle cx="22" cy="7" r="2.4" fill="#dcdcdc"/><path d="M4 6 V25 H25 M0 10 V29 H21" fill="none" stroke="#dcdcdc" stroke-width="2"/></svg>
<svg class="a" style="left:3660px;top:206px;" width="16" height="12" viewBox="0 0 16 12"><path d="M2 3.5999999999999996 L8 8.7 L14 3.5999999999999996" fill="none" stroke="#d0d0d0" stroke-width="2"/></svg>
<div class="a" style="left:3749px;top:192px;width:230px;height:38px;background:#1d1d1d;border-radius:8px;box-shadow:inset 0 0 0 2px #393939, 0 1px 1px #161616;"></div>
<svg class="a" style="left:3758px;top:196px;" width="30" height="30" viewBox="0 0 30 30"><circle cx="17" cy="12" r="8.5" fill="none" stroke="#d8d8d8" stroke-width="2.4"/><path d="M11 18 L3 27" stroke="#d8d8d8" stroke-width="2.6"/></svg>
<div class="a" style="left:4114px;top:192px;width:64px;height:38px;background:#282828;border-radius:8px;box-shadow:inset 0 0 0 2px #393939, 0 1px 1px #161616;"></div>
<svg class="a" style="left:4120px;top:196px;" width="32" height="32" viewBox="0 0 32 32"><path d="M3 4 H27 L18 15 V27 L13 24 V15 Z" fill="none" stroke="#d8d8d8" stroke-width="2.2" stroke-linejoin="round"/></svg>
<svg class="a" style="left:4157px;top:206px;" width="16" height="12" viewBox="0 0 16 12"><path d="M2 3.5999999999999996 L8 8.7 L14 3.5999999999999996" fill="none" stroke="#d0d0d0" stroke-width="2"/></svg>
<div class="a" style="left:4189px;top:192px;width:38px;height:38px;background:#545454;border-radius:8px;box-shadow:inset 0 0 0 1.5px #484848;"></div>
<svg class="a" style="left:4192px;top:195px;" width="32" height="32" viewBox="0 0 32 32"><path d="M4 9 H11 M4 9 V26 H27 V18 M11 16 H20 V18 H11 Z" fill="none" stroke="#a8a8a8" stroke-width="2"/><circle cx="23" cy="10" r="7" fill="#d8d8d8"/><path d="M23 6 V14 M19 10 H27" stroke="#545454" stroke-width="2"/></svg>
<div class="a" style="left:3528px;top:240px;width:714px;height:40px;background:#282828;"></div>
<div class="a" style="left:3528px;top:280px;width:714px;height:40px;background:#2b2b2b;"></div>
<div class="a" style="left:3528px;top:320px;width:714px;height:40px;background:#282828;"></div>
<div class="a" style="left:3528px;top:360px;width:714px;height:40px;background:#2b2b2b;"></div>
<div class="a" style="left:3528px;top:400px;width:714px;height:40px;background:#282828;"></div>
<div class="a" style="left:3528px;top:440px;width:714px;height:40px;background:#2b2b2b;"></div>
<div class="a" style="left:3528px;top:480px;width:714px;height:40px;background:#282828;"></div>
<div class="a" style="left:3528px;top:520px;width:714px;height:40px;background:#2b2b2b;"></div>
<div class="a" style="left:3528px;top:560px;width:714px;height:40px;background:#282828;"></div>
<div class="a" style="left:3528px;top:600px;width:714px;height:40px;background:#2b2b2b;"></div>
<div class="a" style="left:3528px;top:640px;width:714px;height:40px;background:#282828;"></div>
<div class="a" style="left:3528px;top:680px;width:714px;height:40px;background:#2b2b2b;"></div>
<div class="a" style="left:3528px;top:720px;width:714px;height:40px;background:#282828;"></div>
<div class="a" style="left:3528px;top:760px;width:714px;height:40px;background:#2b2b2b;"></div>
<div class="a" style="left:3528px;top:800px;width:714px;height:40px;background:#282828;"></div>
<div class="a" style="left:3528px;top:840px;width:714px;height:40px;background:#2b2b2b;"></div>
<div class="a" style="left:3528px;top:880px;width:714px;height:40px;background:#282828;"></div>
<div class="a" style="left:3528px;top:920px;width:714px;height:40px;background:#2b2b2b;"></div>
<div class="a" style="left:3528px;top:398px;width:714px;height:40px;background:#334d80;"></div>
<svg class="a" style="left:3573px;top:245px;" width="30" height="28" viewBox="0 0 30 28"><rect x="1" y="2" width="28" height="6" fill="#d8d8d8"/><rect x="3" y="10" width="24" height="16" fill="#d8d8d8"/><rect x="11" y="14" width="8" height="3" fill="#282828"/></svg>
<div class="t" style="left:3615px;top:249.5px;font-size:23px;color:#dcdcdc;font-weight:normal;">Scene Collection</div>
<svg class="a" style="left:3578px;top:289px;" width="18" height="16" viewBox="0 0 18 16"><path d="M1 2 H17 L9 14 Z" fill="#cfcfcf"/></svg>
<div class="a" style="left:3608px;top:282px;width:40px;height:36px;background:#4a4a4a;border-radius:8px;box-shadow:inset 0 0 0 1px #5a5a5a;"></div>
<svg class="a" style="left:3613px;top:286px;" width="30" height="28" viewBox="0 0 30 28"><rect x="1" y="2" width="28" height="6" fill="#d8d8d8"/><rect x="3" y="10" width="24" height="16" fill="#d8d8d8"/><rect x="11" y="14" width="8" height="3" fill="#4a4a4a"/></svg>
<div class="t" style="left:3655px;top:289.5px;font-size:23px;color:#dcdcdc;font-weight:normal;">Collection</div>
<svg class="a" style="left:4112px;top:288px;" width="24" height="24" viewBox="0 0 24 24"><rect x="0" y="0" width="24" height="24" rx="3" fill="#e8e8e8"/><path d="M5 12 L10 17 L19 6" fill="none" stroke="#282828" stroke-width="3"/></svg>
<svg class="a" style="left:4148px;top:288px;" width="30" height="24" viewBox="0 0 30 24"><path d="M2.5 12 Q15 -1.5 27.5 12 Q15 25.5 2.5 12 Z" fill="none" stroke="#e6e6e6" stroke-width="3.4"/><circle cx="15" cy="12" r="5" fill="#e6e6e6"/></svg>
<svg class="a" style="left:4187px;top:286px;" width="30" height="28" viewBox="0 0 30 28"><path d="M2 9 Q2 7 4 7 H8 L10.5 3 H19.5 L22 7 H26 Q28 7 28 9 V24 Q28 26 26 26 H4 Q2 26 2 24 Z" fill="#e6e6e6"/><circle cx="15" cy="16" r="6.8" fill="#2b2b2b"/><circle cx="15" cy="16" r="3.8" fill="#e6e6e6"/></svg>
<svg class="a" style="left:4148px;top:328px;" width="30" height="24" viewBox="0 0 30 24"><path d="M2.5 12 Q15 -1.5 27.5 12 Q15 25.5 2.5 12 Z" fill="none" stroke="#e6e6e6" stroke-width="3.4"/><circle cx="15" cy="12" r="5" fill="#e6e6e6"/></svg>
<svg class="a" style="left:4187px;top:326px;" width="30" height="28" viewBox="0 0 30 28"><path d="M2 9 Q2 7 4 7 H8 L10.5 3 H19.5 L22 7 H26 Q28 7 28 9 V24 Q28 26 26 26 H4 Q2 26 2 24 Z" fill="#e6e6e6"/><circle cx="15" cy="16" r="6.8" fill="#282828"/><circle cx="15" cy="16" r="3.8" fill="#e6e6e6"/></svg>
<svg class="a" style="left:4148px;top:368px;" width="30" height="24" viewBox="0 0 30 24"><path d="M2.5 12 Q15 -1.5 27.5 12 Q15 25.5 2.5 12 Z" fill="none" stroke="#e6e6e6" stroke-width="3.4"/><circle cx="15" cy="12" r="5" fill="#e6e6e6"/></svg>
<svg class="a" style="left:4187px;top:366px;" width="30" height="28" viewBox="0 0 30 28"><path d="M2 9 Q2 7 4 7 H8 L10.5 3 H19.5 L22 7 H26 Q28 7 28 9 V24 Q28 26 26 26 H4 Q2 26 2 24 Z" fill="#e6e6e6"/><circle cx="15" cy="16" r="6.8" fill="#2b2b2b"/><circle cx="15" cy="16" r="3.8" fill="#e6e6e6"/></svg>
<svg class="a" style="left:4148px;top:407px;" width="30" height="24" viewBox="0 0 30 24"><path d="M2.5 12 Q15 -1.5 27.5 12 Q15 25.5 2.5 12 Z" fill="none" stroke="#e6e6e6" stroke-width="3.4"/><circle cx="15" cy="12" r="5" fill="#e6e6e6"/></svg>
<svg class="a" style="left:4187px;top:405px;" width="30" height="28" viewBox="0 0 30 28"><path d="M2 9 Q2 7 4 7 H8 L10.5 3 H19.5 L22 7 H26 Q28 7 28 9 V24 Q28 26 26 26 H4 Q2 26 2 24 Z" fill="#e6e6e6"/><circle cx="15" cy="16" r="6.8" fill="#334d80"/><circle cx="15" cy="16" r="3.8" fill="#e6e6e6"/></svg>
<div class="a" style="left:3584px;top:328px;width:1px;height:98px;background:#555;"></div>
<svg class="a" style="left:3622px;top:370px;" width="4" height="60" viewBox="0 0 4 60"><path d="M2 0 V60" stroke="#666" stroke-width="1.2" stroke-dasharray="8 6"/></svg>
<svg class="a" style="left:3618px;top:329px;" width="18" height="16" viewBox="0 0 18 16"><path d="M1 2 H17 L9 14 Z" fill="#cfcfcf"/></svg>
<svg class="a" style="left:3652px;top:324px;" width="32" height="32" viewBox="0 0 32 32"><path d="M15 3.5 V17 L4.5 26 M15 17 H29" fill="none" stroke="#cf8a4c" stroke-width="4.6" stroke-linecap="round" stroke-linejoin="round"/></svg>
<div class="t" style="left:3695px;top:329.5px;font-size:23px;color:#dcdcdc;font-weight:normal;">Empty</div>
<svg class="a" style="left:3658px;top:374px;" width="14" height="14" viewBox="0 0 14 14"><path d="M2 1 L12 7 L2 13 Z" fill="#cfcfcf"/></svg>
<svg class="a" style="left:3692px;top:365px;" width="30" height="30" viewBox="0 0 30 30"><path d="M3 4 H27 L15 26 Z" fill="none" stroke="#cf8a4c" stroke-width="4" stroke-linejoin="round"/></svg>
<div class="t" style="left:3735px;top:370.5px;font-size:23px;color:#dcdcdc;font-weight:normal;">Box</div>
<svg class="a" style="left:3818px;top:365px;" width="30" height="30" viewBox="0 0 30 30"><g transform="rotate(45 15 15)"><path d="M15 12 V27" stroke="#5b8be6" stroke-width="6.6" stroke-linecap="round"/><circle cx="15" cy="8.5" r="7.6" fill="#5b8be6"/><path d="M15 8.5 V0" stroke="#2b2b2b" stroke-width="5.4"/><path d="M15 13 V27" stroke="#2b2b2b" stroke-width="2.2" stroke-linecap="round"/><circle cx="15" cy="8.5" r="5.4" fill="#2b2b2b"/><path d="M15 8.5 V-1" stroke="#2b2b2b" stroke-width="5.4"/></g></svg>
<svg class="a" style="left:3860px;top:364px;" width="30" height="30" viewBox="0 0 30 30"><path d="M5 5 H25 L15 25 Z" fill="none" stroke="#1ec0a0" stroke-width="2"/><rect x="2" y="2" width="6" height="6" fill="#2b2b2b" stroke="#1ec0a0" stroke-width="2"/><rect x="22" y="2" width="6" height="6" fill="#2b2b2b" stroke="#1ec0a0" stroke-width="2"/><rect x="12" y="22" width="6" height="6" fill="#2b2b2b" stroke="#1ec0a0" stroke-width="2"/></svg>
<svg class="a" style="left:3658px;top:412px;" width="14" height="14" viewBox="0 0 14 14"><path d="M2 1 L12 7 L2 13 Z" fill="#cfcfcf"/></svg>
<div class="a" style="left:3688px;top:400px;width:38px;height:36px;background:#506080;border-radius:8px;box-shadow:inset 0 0 0 1px #7080a0;"></div>
<svg class="a" style="left:3692px;top:404px;" width="30" height="30" viewBox="0 0 30 30"><path d="M3 4 H27 L15 26 Z" fill="none" stroke="#cf8a4c" stroke-width="4" stroke-linejoin="round"/></svg>
<div class="t" style="left:3735px;top:409.5px;font-size:23px;color:#ffaf29;font-weight:normal;">Deckel</div>
<svg class="a" style="left:3852px;top:404px;" width="30" height="30" viewBox="0 0 30 30"><path d="M3 4 H14 Q18 4 14 9 L8 18 Q5 22 11 22 H24 M19 17 L25 22 L19 27" fill="none" stroke="#bdbdbd" stroke-width="2"/></svg>
<svg class="a" style="left:3890px;top:404px;" width="30" height="30" viewBox="0 0 30 30"><g transform="rotate(45 15 15)"><path d="M15 12 V27" stroke="#5b8be6" stroke-width="6.6" stroke-linecap="round"/><circle cx="15" cy="8.5" r="7.6" fill="#5b8be6"/><path d="M15 8.5 V0" stroke="#334d80" stroke-width="5.4"/><path d="M15 13 V27" stroke="#334d80" stroke-width="2.2" stroke-linecap="round"/><circle cx="15" cy="8.5" r="5.4" fill="#334d80"/><path d="M15 8.5 V-1" stroke="#334d80" stroke-width="5.4"/></g></svg>
<svg class="a" style="left:3932px;top:403px;" width="30" height="30" viewBox="0 0 30 30"><path d="M5 5 H25 L15 25 Z" fill="none" stroke="#1ec0a0" stroke-width="2"/><rect x="2" y="2" width="6" height="6" fill="#334d80" stroke="#1ec0a0" stroke-width="2"/><rect x="22" y="2" width="6" height="6" fill="#334d80" stroke="#1ec0a0" stroke-width="2"/><rect x="12" y="22" width="6" height="6" fill="#334d80" stroke="#1ec0a0" stroke-width="2"/></svg>
<div class="a" style="left:3528px;top:972px;width:714px;height:1649px;background:#303030;border-radius:14px;overflow:hidden;"></div>
<div class="a" style="left:3528px;top:1022px;width:57px;height:1599px;background:#1e1e1e;border-radius:0 0 0 12px;"></div>
<div class="a" style="left:3544px;top:977px;width:62px;height:38px;background:#282828;border-radius:8px;box-shadow:inset 0 0 0 2px #393939, 0 1px 1px #161616;"></div>
<svg class="a" style="left:3551px;top:982px;" width="30" height="30" viewBox="0 0 30 30"><rect x="2" y="2" width="25" height="11" rx="5.5" fill="#e0e0e0"/><rect x="2" y="16" width="25" height="11" rx="5.5" fill="#e0e0e0"/><rect x="15" y="5" width="9" height="5" rx="2.5" fill="#282828"/><rect x="15" y="19" width="9" height="5" rx="2.5" fill="#282828"/></svg>
<svg class="a" style="left:3586px;top:991px;" width="16" height="12" viewBox="0 0 16 12"><path d="M2 3.5999999999999996 L8 8.7 L14 3.5999999999999996" fill="none" stroke="#d0d0d0" stroke-width="2"/></svg>
<div class="a" style="left:3774px;top:977px;width:229px;height:38px;background:#1d1d1d;border-radius:8px;box-shadow:inset 0 0 0 2px #393939, 0 1px 1px #161616;"></div>
<svg class="a" style="left:3782px;top:981px;" width="30" height="30" viewBox="0 0 30 30"><circle cx="17" cy="12" r="8.5" fill="none" stroke="#d8d8d8" stroke-width="2.4"/><path d="M11 18 L3 27" stroke="#d8d8d8" stroke-width="2.6"/></svg>
<div class="a" style="left:4189px;top:977px;width:38px;height:38px;background:#282828;border-radius:8px;box-shadow:inset 0 0 0 2px #393939, 0 1px 1px #161616;"></div>
<svg class="a" style="left:4200px;top:991px;" width="16" height="12" viewBox="0 0 16 12"><path d="M2 3.5999999999999996 L8 8.7 L14 3.5999999999999996" fill="none" stroke="#d0d0d0" stroke-width="2"/></svg>
<div class="a" style="left:3533px;top:1480px;width:52px;height:52px;background:#303030;border-radius:8px 0 0 8px;"></div>
<svg class="a" style="left:3541px;top:1051px;" width="34" height="34" viewBox="0 0 34 34"><path d="M9 3 V14" stroke="#bdbdbd" stroke-width="2.4"/><path d="M4 22 Q4 16 9 16 Q14 16 14 22 V28 Q9 32 4 28 Z" fill="#bdbdbd"/><path d="M25 14 V29 M20 3 V9 Q20 14 25 14 Q30 14 30 9 V3" fill="none" stroke="#bdbdbd" stroke-width="3"/></svg>
<svg class="a" style="left:3541px;top:1118px;" width="34" height="34" viewBox="0 0 34 34"><rect x="3" y="11" width="28" height="18" rx="2" fill="none" stroke="#bdbdbd" stroke-width="3"/><path d="M8 11 V5 H20 V11 M8 17 H22 M8 22 H22" stroke="#bdbdbd" stroke-width="2.4" fill="none"/><circle cx="27" cy="17" r="1.6" fill="#bdbdbd"/><circle cx="27" cy="23" r="1.6" fill="#bdbdbd"/></svg>
<svg class="a" style="left:3541px;top:1177px;" width="34" height="34" viewBox="0 0 34 34"><rect x="3" y="4" width="28" height="9" rx="2" fill="#bdbdbd"/><path d="M7 13 V30 H27 V13" fill="#bdbdbd"/><path d="M11 28 L17 18 L23 28 Z" fill="#1d1d1d"/></svg>
<svg class="a" style="left:3541px;top:1233px;" width="34" height="34" viewBox="0 0 34 34"><rect x="9" y="2" width="22" height="20" fill="none" stroke="#bdbdbd" stroke-width="2.4"/><path d="M9 22 L17 12 L22 17 L25 14 L31 20" fill="#bdbdbd"/><path d="M5 6 V26 H27 M1 10 V30 H23" fill="none" stroke="#bdbdbd" stroke-width="2"/></svg>
<svg class="a" style="left:3541px;top:1288px;" width="34" height="34" viewBox="0 0 34 34"><path d="M12.7 3.7 L19 18 Q16 27 13.3 27.6 Q6 27 3.9 22.4 Q3 20 5 16 Z" fill="#bdbdbd"/><circle cx="23.8" cy="23.5" r="7" fill="none" stroke="#bdbdbd" stroke-width="2.2"/><circle cx="27.9" cy="7.8" r="4" fill="#bdbdbd"/><path d="M21 21 Q22 19.5 24 19.5" fill="none" stroke="#bdbdbd" stroke-width="1.4"/></svg>
<svg class="a" style="left:3541px;top:1345px;" width="34" height="34" viewBox="0 0 34 34"><circle cx="18" cy="17" r="13.2" fill="none" stroke="#b05a68" stroke-width="2.2"/><path d="M9 9 Q14 5 19.5 7 L20 10 L16.5 11.5 L17 14.5 L13 15.5 L14.5 19 L12 20.5 Q8 16 8.5 12 Z M17.5 19 Q22 17.5 25 20.5 L24 24.5 L20 28 L18 23 Z" fill="#b05a68"/><path d="M4 31 L9 26 M27 8 L32 3.5" stroke="#b05a68" stroke-width="2.2"/></svg>
<svg class="a" style="left:3541px;top:1417px;" width="34" height="34" viewBox="0 0 34 34"><rect x="4.5" y="5.5" width="27" height="6.5" fill="none" stroke="#e0e0e0" stroke-width="2.2"/><path d="M6.5 14.5 V30.5 H29.5 V14.5" fill="none" stroke="#e0e0e0" stroke-width="2.2"/><rect x="14" y="17.5" width="8" height="3.6" rx="1.8" fill="#e0e0e0"/></svg>
<svg class="a" style="left:3541px;top:1489px;" width="34" height="34" viewBox="0 0 34 34"><path d="M1 1 V8 M1 1 H8 M33 1 V8 M33 1 H26 M1 33 V26 M1 33 H8 M33 33 V26 M33 33 H26" stroke="#e8903a" stroke-width="2.4" fill="none"/><rect x="8" y="8" width="18" height="18" fill="#e8903a"/></svg>
<svg class="a" style="left:3541px;top:1545px;" width="34" height="34" viewBox="0 0 34 34"><path d="M5 30 L17 18 M17 18 Q13 9 20 4 Q25 1 30 4 L24 10 L26 13 L31 8 Q33 14 29 18 Q24 22 18 19" fill="none" stroke="#5a8ae0" stroke-width="4" stroke-linecap="round" stroke-linejoin="round"/></svg>
<svg class="a" style="left:3541px;top:1603px;" width="34" height="34" viewBox="0 0 34 34"><path d="M6 5 L27 12 M6 5 L7 27 M6 5 L25 26" stroke="#5a8ae0" stroke-width="2.4"/><circle cx="6" cy="5" r="4" fill="#5a8ae0"/><circle cx="27" cy="12" r="3.4" fill="#5a8ae0"/><circle cx="7" cy="27" r="3.4" fill="#5a8ae0"/><circle cx="25" cy="26" r="3.4" fill="#5a8ae0"/></svg>
<svg class="a" style="left:3541px;top:1657px;" width="34" height="34" viewBox="0 0 34 34"><circle cx="15" cy="18" r="12" fill="none" stroke="#5a8ae0" stroke-width="3"/><circle cx="15" cy="18" r="6" fill="#5a8ae0"/><circle cx="27" cy="6" r="4" fill="#5a8ae0"/></svg>
<svg class="a" style="left:3541px;top:1714px;" width="34" height="34" viewBox="0 0 34 34"><ellipse cx="16" cy="19" rx="12" ry="10" fill="none" stroke="#5a8ae0" stroke-width="3" transform="rotate(-30 16 19)"/><circle cx="15" cy="20" r="4" fill="none" stroke="#5a8ae0" stroke-width="3"/><circle cx="27" cy="7" r="4" fill="#5a8ae0"/></svg>
<svg class="a" style="left:3541px;top:1770px;" width="34" height="34" viewBox="0 0 34 34"><path d="M5 5 H29 L17 29 Z" fill="none" stroke="#1ec0a0" stroke-width="2.4"/><rect x="2" y="2" width="7" height="7" fill="#1d1d1d" stroke="#1ec0a0" stroke-width="2.4"/><rect x="25" y="2" width="7" height="7" fill="#1d1d1d" stroke="#1ec0a0" stroke-width="2.4"/><rect x="13" y="25" width="7" height="7" fill="#1d1d1d" stroke="#1ec0a0" stroke-width="2.4"/></svg>
<svg class="a" style="left:3541px;top:1826px;" width="34" height="34" viewBox="0 0 34 34"><circle cx="17" cy="17" r="14" fill="#b85464"/><path d="M17 17 H3 A14 14 0 0 0 17 31 Z" fill="#121212"/><path d="M17 3 V17 H31" fill="none" stroke="#121212" stroke-width="1.6"/></svg>
<svg class="a" style="left:3541px;top:1897px;" width="34" height="34" viewBox="0 0 34 34"><rect x="3" y="3" width="7" height="7" fill="#c85060"/><rect x="3" y="10" width="7" height="7" fill="#1d1d1d"/><rect x="3" y="17" width="7" height="7" fill="#c85060"/><rect x="3" y="24" width="7" height="7" fill="#1d1d1d"/><rect x="10" y="3" width="7" height="7" fill="#1d1d1d"/><rect x="10" y="10" width="7" height="7" fill="#c85060"/><rect x="10" y="17" width="7" height="7" fill="#1d1d1d"/><rect x="10" y="24" width="7" height="7" fill="#c85060"/><rect x="17" y="3" width="7" height="7" fill="#c85060"/><rect x="17" y="10" width="7" height="7" fill="#1d1d1d"/><rect x="17" y="17" width="7" height="7" fill="#c85060"/><rect x="17" y="24" width="7" height="7" fill="#1d1d1d"/><rect x="24" y="3" width="7" height="7" fill="#1d1d1d"/><rect x="24" y="10" width="7" height="7" fill="#c85060"/><rect x="24" y="17" width="7" height="7" fill="#1d1d1d"/><rect x="24" y="24" width="7" height="7" fill="#c85060"/><rect x="3" y="3" width="28" height="28" fill="none" stroke="#c85060" stroke-width="1"/></svg>
<svg class="a" style="left:3606px;top:1043px;" width="30" height="30" viewBox="0 0 30 30"><path d="M1 8 V1 H8 M22 1 H29 V8 M29 22 V29 H22 M8 29 H1 V22" fill="none" stroke="#bdbdbd" stroke-width="2"/><rect x="7" y="7" width="16" height="16" fill="#e0e0e0"/></svg>
<div class="t" style="left:3654px;top:1046.5px;font-size:23px;color:#e6e6e6;font-weight:normal;text-shadow:0 1.5px 1.5px rgba(0,0,0,0.6);">Deckel</div>
<svg class="a" style="left:4193px;top:1043px;" width="30" height="30" viewBox="0 0 30 30"><g transform="translate(17 13) rotate(45)"><path d="M0 8 V19 M-7.5 8 H7.5 M-4.5 8 L-3.5 -5 M3.5 -5 L4.5 8 M-5.5 -5 H5.5 V-10 H-5.5 Z" fill="none" stroke="#9a9a9a" stroke-width="2.1" stroke-linejoin="round"/></g></svg>
<div class="a" style="left:3602px;top:1111px;width:625px;height:38px;background:#1d1d1d;border-radius:8px;box-shadow:inset 0 0 0 1px #2a2a2a;"></div>
<div class="a" style="left:3664px;top:1111px;width:1px;height:38px;background:#303030;"></div>
<svg class="a" style="left:3609px;top:1115px;" width="30" height="30" viewBox="0 0 30 30"><path d="M1 8 V1 H8 M22 1 H29 V8 M29 22 V29 H22 M8 29 H1 V22" fill="none" stroke="#bdbdbd" stroke-width="2"/><rect x="7" y="7" width="16" height="16" fill="#e0e0e0"/></svg>
<svg class="a" style="left:3643px;top:1125px;" width="16" height="12" viewBox="0 0 16 12"><path d="M2 3.5999999999999996 L8 8.7 L14 3.5999999999999996" fill="none" stroke="#d0d0d0" stroke-width="2"/></svg>
<div class="t" style="left:3679px;top:1119.5px;font-size:23px;color:#e6e6e6;font-weight:normal;text-shadow:0 1.5px 1.5px rgba(0,0,0,0.6);">Deckel</div>
<div class="a" style="left:3602px;top:1170px;width:626px;height:561px;background:#3d3d3d;border-radius:10px;"></div>
<svg class="a" style="left:3616px;top:1186px;" width="20" height="16" viewBox="0 0 20 16"><path d="M2 4.8 L10 11.6 L18 4.8" fill="none" stroke="#cfcfcf" stroke-width="2"/></svg>
<div class="t" style="left:3646px;top:1184.5px;font-size:23px;color:#e8e8e8;font-weight:normal;text-shadow:0 1.5px 1.5px rgba(0,0,0,0.6);">Transform</div>
<svg class="a" style="left:4193px;top:1189px;" width="28" height="16" viewBox="0 0 28 16"><rect x="1.5" y="2" width="2.6" height="2.6" fill="#6a6a6a"/><rect x="1.0" y="1.5" width="2.6" height="2.6" fill="#151515"/><rect x="1.5" y="9" width="2.6" height="2.6" fill="#6a6a6a"/><rect x="1.0" y="8.5" width="2.6" height="2.6" fill="#151515"/><rect x="7.8" y="2" width="2.6" height="2.6" fill="#6a6a6a"/><rect x="7.3" y="1.5" width="2.6" height="2.6" fill="#151515"/><rect x="7.8" y="9" width="2.6" height="2.6" fill="#6a6a6a"/><rect x="7.3" y="8.5" width="2.6" height="2.6" fill="#151515"/><rect x="14.1" y="2" width="2.6" height="2.6" fill="#6a6a6a"/><rect x="13.6" y="1.5" width="2.6" height="2.6" fill="#151515"/><rect x="14.1" y="9" width="2.6" height="2.6" fill="#6a6a6a"/><rect x="13.6" y="8.5" width="2.6" height="2.6" fill="#151515"/><rect x="20.4" y="2" width="2.6" height="2.6" fill="#6a6a6a"/><rect x="19.9" y="1.5" width="2.6" height="2.6" fill="#151515"/><rect x="20.4" y="9" width="2.6" height="2.6" fill="#6a6a6a"/><rect x="19.9" y="8.5" width="2.6" height="2.6" fill="#151515"/></svg>
<div class="a" style="left:3850px;top:1239px;width:280px;height:34px;background:#467a2b;border-radius:8px 0 0 0px;"></div>
<div class="t" style="right:527px;top:1244.8px;font-size:23px;color:#e6e6e6;font-weight:normal;text-align:right;text-shadow:0 1.5px 1.5px rgba(0,0,0,0.6);">Location X</div>
<div class="t" style="left:3490px;width:1000px;text-align:center;top:1244.8px;font-size:23px;color:#e6e6e6;font-weight:normal;text-shadow:0 1.5px 1.5px rgba(0,0,0,0.6);letter-spacing:0.7px;">0 m</div>
<svg class="a" style="left:4138px;top:1241.0px;" width="30" height="30" viewBox="0 0 30 30"><path d="M1.6 14.5 V11 A6.6 6.6 0 0 1 14.6 9.6" fill="none" stroke="#a8a8a8" stroke-width="2.1"/><rect x="11.2" y="14" width="16.6" height="10.4" fill="none" stroke="#a8a8a8" stroke-width="2.1"/><rect x="18.2" y="17.6" width="2.6" height="3.2" fill="#a8a8a8"/></svg>
<svg class="a" style="left:4177px;top:1243.0px;" width="26" height="26" viewBox="0 0 26 26"><path d="M13 2 L24 13 L13 24 L2 13 Z" fill="none" stroke="#e0e0e0" stroke-width="2.2"/></svg>
<div class="a" style="left:3850px;top:1276px;width:280px;height:37px;background:#467a2b;border-radius:0px 0 0 0px;"></div>
<div class="t" style="right:527px;top:1283.3px;font-size:23px;color:#e6e6e6;font-weight:normal;text-align:right;text-shadow:0 1.5px 1.5px rgba(0,0,0,0.6);">Y</div>
<div class="t" style="left:3490px;width:1000px;text-align:center;top:1283.3px;font-size:23px;color:#e6e6e6;font-weight:normal;text-shadow:0 1.5px 1.5px rgba(0,0,0,0.6);letter-spacing:0.7px;">0 m</div>
<svg class="a" style="left:4138px;top:1279.5px;" width="30" height="30" viewBox="0 0 30 30"><path d="M1.6 14.5 V11 A6.6 6.6 0 0 1 14.6 9.6" fill="none" stroke="#a8a8a8" stroke-width="2.1"/><rect x="11.2" y="14" width="16.6" height="10.4" fill="none" stroke="#a8a8a8" stroke-width="2.1"/><rect x="18.2" y="17.6" width="2.6" height="3.2" fill="#a8a8a8"/></svg>
<svg class="a" style="left:4177px;top:1281.5px;" width="26" height="26" viewBox="0 0 26 26"><path d="M13 2 L24 13 L13 24 L2 13 Z" fill="none" stroke="#e0e0e0" stroke-width="2.2"/></svg>
<div class="a" style="left:3850px;top:1316px;width:280px;height:37px;background:#467a2b;border-radius:0px 0 0 8px;box-shadow:0 2px 1px #333;"></div>
<div class="t" style="right:527px;top:1323.3px;font-size:23px;color:#e6e6e6;font-weight:normal;text-align:right;text-shadow:0 1.5px 1.5px rgba(0,0,0,0.6);">Z</div>
<div class="t" style="left:3490px;width:1000px;text-align:center;top:1323.3px;font-size:23px;color:#e6e6e6;font-weight:normal;text-shadow:0 1.5px 1.5px rgba(0,0,0,0.6);letter-spacing:0.7px;">0.80242 m</div>
<svg class="a" style="left:4138px;top:1319.5px;" width="30" height="30" viewBox="0 0 30 30"><path d="M1.6 14.5 V11 A6.6 6.6 0 0 1 14.6 9.6" fill="none" stroke="#a8a8a8" stroke-width="2.1"/><rect x="11.2" y="14" width="16.6" height="10.4" fill="none" stroke="#a8a8a8" stroke-width="2.1"/><rect x="18.2" y="17.6" width="2.6" height="3.2" fill="#a8a8a8"/></svg>
<svg class="a" style="left:4177px;top:1321.5px;" width="26" height="26" viewBox="0 0 26 26"><path d="M13 2 L24 13 L13 24 L2 13 Z" fill="none" stroke="#e0e0e0" stroke-width="2.2"/></svg>
<div class="a" style="left:3850px;top:1368px;width:280px;height:35px;background:#467a2b;border-radius:8px 0 0 0px;"></div>
<div class="t" style="right:527px;top:1374.3px;font-size:23px;color:#e6e6e6;font-weight:normal;text-align:right;text-shadow:0 1.5px 1.5px rgba(0,0,0,0.6);">Rotation X</div>
<div class="t" style="left:3490px;width:1000px;text-align:center;top:1374.3px;font-size:23px;color:#e6e6e6;font-weight:normal;text-shadow:0 1.5px 1.5px rgba(0,0,0,0.6);letter-spacing:0.7px;">35.879°</div>
<svg class="a" style="left:4138px;top:1370.5px;" width="30" height="30" viewBox="0 0 30 30"><path d="M1.6 14.5 V11 A6.6 6.6 0 0 1 14.6 9.6" fill="none" stroke="#a8a8a8" stroke-width="2.1"/><rect x="11.2" y="14" width="16.6" height="10.4" fill="none" stroke="#a8a8a8" stroke-width="2.1"/><rect x="18.2" y="17.6" width="2.6" height="3.2" fill="#a8a8a8"/></svg>
<svg class="a" style="left:4177px;top:1372.5px;" width="26" height="26" viewBox="0 0 26 26"><path d="M13 2 L24 13 L13 24 L2 13 Z" fill="none" stroke="#e0e0e0" stroke-width="2.2"/></svg>
<div class="a" style="left:3850px;top:1406px;width:280px;height:37px;background:#467a2b;border-radius:0px 0 0 0px;"></div>
<div class="t" style="right:527px;top:1413.3px;font-size:23px;color:#e6e6e6;font-weight:normal;text-align:right;text-shadow:0 1.5px 1.5px rgba(0,0,0,0.6);">Y</div>
<div class="t" style="left:3490px;width:1000px;text-align:center;top:1413.3px;font-size:23px;color:#e6e6e6;font-weight:normal;text-shadow:0 1.5px 1.5px rgba(0,0,0,0.6);letter-spacing:0.7px;">0°</div>
<svg class="a" style="left:4138px;top:1409.5px;" width="30" height="30" viewBox="0 0 30 30"><path d="M1.6 14.5 V11 A6.6 6.6 0 0 1 14.6 9.6" fill="none" stroke="#a8a8a8" stroke-width="2.1"/><rect x="11.2" y="14" width="16.6" height="10.4" fill="none" stroke="#a8a8a8" stroke-width="2.1"/><rect x="18.2" y="17.6" width="2.6" height="3.2" fill="#a8a8a8"/></svg>
<svg class="a" style="left:4177px;top:1411.5px;" width="26" height="26" viewBox="0 0 26 26"><path d="M13 2 L24 13 L13 24 L2 13 Z" fill="none" stroke="#e0e0e0" stroke-width="2.2"/></svg>
<div class="a" style="left:3850px;top:1446px;width:280px;height:38px;background:#467a2b;border-radius:0px 0 0 8px;box-shadow:0 2px 1px #333;"></div>
<div class="t" style="right:527px;top:1453.8px;font-size:23px;color:#e6e6e6;font-weight:normal;text-align:right;text-shadow:0 1.5px 1.5px rgba(0,0,0,0.6);">Z</div>
<div class="t" style="left:3490px;width:1000px;text-align:center;top:1453.8px;font-size:23px;color:#e6e6e6;font-weight:normal;text-shadow:0 1.5px 1.5px rgba(0,0,0,0.6);letter-spacing:0.7px;">0°</div>
<svg class="a" style="left:4138px;top:1450.0px;" width="30" height="30" viewBox="0 0 30 30"><path d="M1.6 14.5 V11 A6.6 6.6 0 0 1 14.6 9.6" fill="none" stroke="#a8a8a8" stroke-width="2.1"/><rect x="11.2" y="14" width="16.6" height="10.4" fill="none" stroke="#a8a8a8" stroke-width="2.1"/><rect x="18.2" y="17.6" width="2.6" height="3.2" fill="#a8a8a8"/></svg>
<svg class="a" style="left:4177px;top:1452.0px;" width="26" height="26" viewBox="0 0 26 26"><path d="M13 2 L24 13 L13 24 L2 13 Z" fill="none" stroke="#e0e0e0" stroke-width="2.2"/></svg>
<div class="a" style="left:3850px;top:1498px;width:280px;height:36px;background:#282828;border-radius:8px;box-shadow:0 2px 1px #333;"></div>
<div class="t" style="right:527px;top:1504.5px;font-size:23px;color:#e6e6e6;font-weight:normal;text-align:right;text-shadow:0 1.5px 1.5px rgba(0,0,0,0.6);">Mode</div>
<div class="t" style="left:3864px;top:1504.5px;font-size:23px;color:#e6e6e6;font-weight:normal;text-shadow:0 1.5px 1.5px rgba(0,0,0,0.6);">XYZ Euler</div>
<svg class="a" style="left:4110px;top:1510px;" width="16" height="12" viewBox="0 0 16 12"><path d="M2 3.5999999999999996 L8 8.7 L14 3.5999999999999996" fill="none" stroke="#d0d0d0" stroke-width="2"/></svg>
<div class="a" style="left:4186px;top:1512px;width:8px;height:8px;background:#d8d8d8;border-radius:4px;"></div>
<div class="a" style="left:3850px;top:1548px;width:280px;height:36px;background:#545454;border-radius:8px 0 0 0px;"></div>
<div class="t" style="right:527px;top:1554.8px;font-size:23px;color:#e6e6e6;font-weight:normal;text-align:right;text-shadow:0 1.5px 1.5px rgba(0,0,0,0.6);">Scale X</div>
<div class="t" style="left:3490px;width:1000px;text-align:center;top:1554.8px;font-size:23px;color:#e6e6e6;font-weight:normal;text-shadow:0 1.5px 1.5px rgba(0,0,0,0.6);letter-spacing:0.7px;">1.520</div>
<svg class="a" style="left:4138px;top:1551.0px;" width="30" height="30" viewBox="0 0 30 30"><path d="M1.6 14.5 V11 A6.6 6.6 0 0 1 14.6 9.6" fill="none" stroke="#a8a8a8" stroke-width="2.1"/><rect x="11.2" y="14" width="16.6" height="10.4" fill="none" stroke="#a8a8a8" stroke-width="2.1"/><rect x="18.2" y="17.6" width="2.6" height="3.2" fill="#a8a8a8"/></svg>
<div class="a" style="left:4186px;top:1562.0px;width:8px;height:8px;background:#d8d8d8;border-radius:4px;"></div>
<div class="a" style="left:3850px;top:1587px;width:280px;height:37px;background:#545454;border-radius:0px 0 0 0px;"></div>
<div class="t" style="right:527px;top:1594.3px;font-size:23px;color:#e6e6e6;font-weight:normal;text-align:right;text-shadow:0 1.5px 1.5px rgba(0,0,0,0.6);">Y</div>
<div class="t" style="left:3490px;width:1000px;text-align:center;top:1594.3px;font-size:23px;color:#e6e6e6;font-weight:normal;text-shadow:0 1.5px 1.5px rgba(0,0,0,0.6);letter-spacing:0.7px;">1.020</div>
<svg class="a" style="left:4138px;top:1590.5px;" width="30" height="30" viewBox="0 0 30 30"><path d="M1.6 14.5 V11 A6.6 6.6 0 0 1 14.6 9.6" fill="none" stroke="#a8a8a8" stroke-width="2.1"/><rect x="11.2" y="14" width="16.6" height="10.4" fill="none" stroke="#a8a8a8" stroke-width="2.1"/><rect x="18.2" y="17.6" width="2.6" height="3.2" fill="#a8a8a8"/></svg>
<div class="a" style="left:4186px;top:1601.5px;width:8px;height:8px;background:#d8d8d8;border-radius:4px;"></div>
<div class="a" style="left:3850px;top:1627px;width:280px;height:36px;background:#545454;border-radius:0px 0 0 8px;box-shadow:0 2px 1px #333;"></div>
<div class="t" style="right:527px;top:1633.8px;font-size:23px;color:#e6e6e6;font-weight:normal;text-align:right;text-shadow:0 1.5px 1.5px rgba(0,0,0,0.6);">Z</div>
<div class="t" style="left:3490px;width:1000px;text-align:center;top:1633.8px;font-size:23px;color:#e6e6e6;font-weight:normal;text-shadow:0 1.5px 1.5px rgba(0,0,0,0.6);letter-spacing:0.7px;">0.100</div>
<svg class="a" style="left:4138px;top:1630.0px;" width="30" height="30" viewBox="0 0 30 30"><path d="M1.6 14.5 V11 A6.6 6.6 0 0 1 14.6 9.6" fill="none" stroke="#a8a8a8" stroke-width="2.1"/><rect x="11.2" y="14" width="16.6" height="10.4" fill="none" stroke="#a8a8a8" stroke-width="2.1"/><rect x="18.2" y="17.6" width="2.6" height="3.2" fill="#a8a8a8"/></svg>
<div class="a" style="left:4186px;top:1641.0px;width:8px;height:8px;background:#d8d8d8;border-radius:4px;"></div>
<svg class="a" style="left:3647px;top:1698px;" width="16" height="22" viewBox="0 0 16 22"><path d="M4 3 L12 11 L4 19" fill="none" stroke="#cfcfcf" stroke-width="2"/></svg>
<div class="t" style="left:3674px;top:1696.5px;font-size:23px;color:#e6e6e6;font-weight:normal;text-shadow:0 1.5px 1.5px rgba(0,0,0,0.6);">Delta Transform</div>
<div class="a" style="left:3602px;top:1737px;width:626px;height:49px;background:#3d3d3d;border-radius:10px;"></div>
<svg class="a" style="left:3619px;top:1750px;" width="16" height="22" viewBox="0 0 16 22"><path d="M4 3 L12 11 L4 19" fill="none" stroke="#cfcfcf" stroke-width="2"/></svg>
<div class="t" style="left:3645px;top:1750.5px;font-size:23px;color:#e6e6e6;font-weight:normal;text-shadow:0 1.5px 1.5px rgba(0,0,0,0.6);">Relations</div>
<svg class="a" style="left:4193px;top:1755px;" width="28" height="16" viewBox="0 0 28 16"><rect x="1.5" y="2" width="2.6" height="2.6" fill="#6a6a6a"/><rect x="1.0" y="1.5" width="2.6" height="2.6" fill="#151515"/><rect x="1.5" y="9" width="2.6" height="2.6" fill="#6a6a6a"/><rect x="1.0" y="8.5" width="2.6" height="2.6" fill="#151515"/><rect x="7.8" y="2" width="2.6" height="2.6" fill="#6a6a6a"/><rect x="7.3" y="1.5" width="2.6" height="2.6" fill="#151515"/><rect x="7.8" y="9" width="2.6" height="2.6" fill="#6a6a6a"/><rect x="7.3" y="8.5" width="2.6" height="2.6" fill="#151515"/><rect x="14.1" y="2" width="2.6" height="2.6" fill="#6a6a6a"/><rect x="13.6" y="1.5" width="2.6" height="2.6" fill="#151515"/><rect x="14.1" y="9" width="2.6" height="2.6" fill="#6a6a6a"/><rect x="13.6" y="8.5" width="2.6" height="2.6" fill="#151515"/><rect x="20.4" y="2" width="2.6" height="2.6" fill="#6a6a6a"/><rect x="19.9" y="1.5" width="2.6" height="2.6" fill="#151515"/><rect x="20.4" y="9" width="2.6" height="2.6" fill="#6a6a6a"/><rect x="19.9" y="8.5" width="2.6" height="2.6" fill="#151515"/></svg>
<div class="a" style="left:3602px;top:1791px;width:626px;height:49px;background:#3d3d3d;border-radius:10px;"></div>
<svg class="a" style="left:3619px;top:1804px;" width="16" height="22" viewBox="0 0 16 22"><path d="M4 3 L12 11 L4 19" fill="none" stroke="#cfcfcf" stroke-width="2"/></svg>
<div class="t" style="left:3645px;top:1804.5px;font-size:23px;color:#e6e6e6;font-weight:normal;text-shadow:0 1.5px 1.5px rgba(0,0,0,0.6);">Collections</div>
<svg class="a" style="left:4193px;top:1809px;" width="28" height="16" viewBox="0 0 28 16"><rect x="1.5" y="2" width="2.6" height="2.6" fill="#6a6a6a"/><rect x="1.0" y="1.5" width="2.6" height="2.6" fill="#151515"/><rect x="1.5" y="9" width="2.6" height="2.6" fill="#6a6a6a"/><rect x="1.0" y="8.5" width="2.6" height="2.6" fill="#151515"/><rect x="7.8" y="2" width="2.6" height="2.6" fill="#6a6a6a"/><rect x="7.3" y="1.5" width="2.6" height="2.6" fill="#151515"/><rect x="7.8" y="9" width="2.6" height="2.6" fill="#6a6a6a"/><rect x="7.3" y="8.5" width="2.6" height="2.6" fill="#151515"/><rect x="14.1" y="2" width="2.6" height="2.6" fill="#6a6a6a"/><rect x="13.6" y="1.5" width="2.6" height="2.6" fill="#151515"/><rect x="14.1" y="9" width="2.6" height="2.6" fill="#6a6a6a"/><rect x="13.6" y="8.5" width="2.6" height="2.6" fill="#151515"/><rect x="20.4" y="2" width="2.6" height="2.6" fill="#6a6a6a"/><rect x="19.9" y="1.5" width="2.6" height="2.6" fill="#151515"/><rect x="20.4" y="9" width="2.6" height="2.6" fill="#6a6a6a"/><rect x="19.9" y="8.5" width="2.6" height="2.6" fill="#151515"/></svg>
<div class="a" style="left:3602px;top:1845px;width:626px;height:49px;background:#3d3d3d;border-radius:10px;"></div>
<svg class="a" style="left:3619px;top:1858px;" width="16" height="22" viewBox="0 0 16 22"><path d="M4 3 L12 11 L4 19" fill="none" stroke="#cfcfcf" stroke-width="2"/></svg>
<div class="t" style="left:3645px;top:1858.5px;font-size:23px;color:#e6e6e6;font-weight:normal;text-shadow:0 1.5px 1.5px rgba(0,0,0,0.6);">Instancing</div>
<svg class="a" style="left:4193px;top:1863px;" width="28" height="16" viewBox="0 0 28 16"><rect x="1.5" y="2" width="2.6" height="2.6" fill="#6a6a6a"/><rect x="1.0" y="1.5" width="2.6" height="2.6" fill="#151515"/><rect x="1.5" y="9" width="2.6" height="2.6" fill="#6a6a6a"/><rect x="1.0" y="8.5" width="2.6" height="2.6" fill="#151515"/><rect x="7.8" y="2" width="2.6" height="2.6" fill="#6a6a6a"/><rect x="7.3" y="1.5" width="2.6" height="2.6" fill="#151515"/><rect x="7.8" y="9" width="2.6" height="2.6" fill="#6a6a6a"/><rect x="7.3" y="8.5" width="2.6" height="2.6" fill="#151515"/><rect x="14.1" y="2" width="2.6" height="2.6" fill="#6a6a6a"/><rect x="13.6" y="1.5" width="2.6" height="2.6" fill="#151515"/><rect x="14.1" y="9" width="2.6" height="2.6" fill="#6a6a6a"/><rect x="13.6" y="8.5" width="2.6" height="2.6" fill="#151515"/><rect x="20.4" y="2" width="2.6" height="2.6" fill="#6a6a6a"/><rect x="19.9" y="1.5" width="2.6" height="2.6" fill="#151515"/><rect x="20.4" y="9" width="2.6" height="2.6" fill="#6a6a6a"/><rect x="19.9" y="8.5" width="2.6" height="2.6" fill="#151515"/></svg>
<div class="a" style="left:3602px;top:1899px;width:626px;height:49px;background:#3d3d3d;border-radius:10px;"></div>
<svg class="a" style="left:3619px;top:1912px;" width="16" height="22" viewBox="0 0 16 22"><path d="M4 3 L12 11 L4 19" fill="none" stroke="#cfcfcf" stroke-width="2"/></svg>
<div class="t" style="left:3645px;top:1912.5px;font-size:23px;color:#e6e6e6;font-weight:normal;text-shadow:0 1.5px 1.5px rgba(0,0,0,0.6);">Motion Paths</div>
<svg class="a" style="left:4193px;top:1917px;" width="28" height="16" viewBox="0 0 28 16"><rect x="1.5" y="2" width="2.6" height="2.6" fill="#6a6a6a"/><rect x="1.0" y="1.5" width="2.6" height="2.6" fill="#151515"/><rect x="1.5" y="9" width="2.6" height="2.6" fill="#6a6a6a"/><rect x="1.0" y="8.5" width="2.6" height="2.6" fill="#151515"/><rect x="7.8" y="2" width="2.6" height="2.6" fill="#6a6a6a"/><rect x="7.3" y="1.5" width="2.6" height="2.6" fill="#151515"/><rect x="7.8" y="9" width="2.6" height="2.6" fill="#6a6a6a"/><rect x="7.3" y="8.5" width="2.6" height="2.6" fill="#151515"/><rect x="14.1" y="2" width="2.6" height="2.6" fill="#6a6a6a"/><rect x="13.6" y="1.5" width="2.6" height="2.6" fill="#151515"/><rect x="14.1" y="9" width="2.6" height="2.6" fill="#6a6a6a"/><rect x="13.6" y="8.5" width="2.6" height="2.6" fill="#151515"/><rect x="20.4" y="2" width="2.6" height="2.6" fill="#6a6a6a"/><rect x="19.9" y="1.5" width="2.6" height="2.6" fill="#151515"/><rect x="20.4" y="9" width="2.6" height="2.6" fill="#6a6a6a"/><rect x="19.9" y="8.5" width="2.6" height="2.6" fill="#151515"/></svg>
<div class="a" style="left:3602px;top:1953px;width:626px;height:49px;background:#3d3d3d;border-radius:10px;"></div>
<svg class="a" style="left:3619px;top:1966px;" width="16" height="22" viewBox="0 0 16 22"><path d="M4 3 L12 11 L4 19" fill="none" stroke="#cfcfcf" stroke-width="2"/></svg>
<div class="t" style="left:3645px;top:1966.5px;font-size:23px;color:#e6e6e6;font-weight:normal;text-shadow:0 1.5px 1.5px rgba(0,0,0,0.6);">Visibility</div>
<svg class="a" style="left:4193px;top:1971px;" width="28" height="16" viewBox="0 0 28 16"><rect x="1.5" y="2" width="2.6" height="2.6" fill="#6a6a6a"/><rect x="1.0" y="1.5" width="2.6" height="2.6" fill="#151515"/><rect x="1.5" y="9" width="2.6" height="2.6" fill="#6a6a6a"/><rect x="1.0" y="8.5" width="2.6" height="2.6" fill="#151515"/><rect x="7.8" y="2" width="2.6" height="2.6" fill="#6a6a6a"/><rect x="7.3" y="1.5" width="2.6" height="2.6" fill="#151515"/><rect x="7.8" y="9" width="2.6" height="2.6" fill="#6a6a6a"/><rect x="7.3" y="8.5" width="2.6" height="2.6" fill="#151515"/><rect x="14.1" y="2" width="2.6" height="2.6" fill="#6a6a6a"/><rect x="13.6" y="1.5" width="2.6" height="2.6" fill="#151515"/><rect x="14.1" y="9" width="2.6" height="2.6" fill="#6a6a6a"/><rect x="13.6" y="8.5" width="2.6" height="2.6" fill="#151515"/><rect x="20.4" y="2" width="2.6" height="2.6" fill="#6a6a6a"/><rect x="19.9" y="1.5" width="2.6" height="2.6" fill="#151515"/><rect x="20.4" y="9" width="2.6" height="2.6" fill="#6a6a6a"/><rect x="19.9" y="8.5" width="2.6" height="2.6" fill="#151515"/></svg>
<div class="a" style="left:3602px;top:2007px;width:626px;height:49px;background:#3d3d3d;border-radius:10px;"></div>
<svg class="a" style="left:3619px;top:2020px;" width="16" height="22" viewBox="0 0 16 22"><path d="M4 3 L12 11 L4 19" fill="none" stroke="#cfcfcf" stroke-width="2"/></svg>
<div class="t" style="left:3645px;top:2020.5px;font-size:23px;color:#e6e6e6;font-weight:normal;text-shadow:0 1.5px 1.5px rgba(0,0,0,0.6);">Viewport Display</div>
<svg class="a" style="left:4193px;top:2025px;" width="28" height="16" viewBox="0 0 28 16"><rect x="1.5" y="2" width="2.6" height="2.6" fill="#6a6a6a"/><rect x="1.0" y="1.5" width="2.6" height="2.6" fill="#151515"/><rect x="1.5" y="9" width="2.6" height="2.6" fill="#6a6a6a"/><rect x="1.0" y="8.5" width="2.6" height="2.6" fill="#151515"/><rect x="7.8" y="2" width="2.6" height="2.6" fill="#6a6a6a"/><rect x="7.3" y="1.5" width="2.6" height="2.6" fill="#151515"/><rect x="7.8" y="9" width="2.6" height="2.6" fill="#6a6a6a"/><rect x="7.3" y="8.5" width="2.6" height="2.6" fill="#151515"/><rect x="14.1" y="2" width="2.6" height="2.6" fill="#6a6a6a"/><rect x="13.6" y="1.5" width="2.6" height="2.6" fill="#151515"/><rect x="14.1" y="9" width="2.6" height="2.6" fill="#6a6a6a"/><rect x="13.6" y="8.5" width="2.6" height="2.6" fill="#151515"/><rect x="20.4" y="2" width="2.6" height="2.6" fill="#6a6a6a"/><rect x="19.9" y="1.5" width="2.6" height="2.6" fill="#151515"/><rect x="20.4" y="9" width="2.6" height="2.6" fill="#6a6a6a"/><rect x="19.9" y="8.5" width="2.6" height="2.6" fill="#151515"/></svg>
<div class="a" style="left:3602px;top:2061px;width:626px;height:49px;background:#3d3d3d;border-radius:10px;"></div>
<svg class="a" style="left:3619px;top:2074px;" width="16" height="22" viewBox="0 0 16 22"><path d="M4 3 L12 11 L4 19" fill="none" stroke="#cfcfcf" stroke-width="2"/></svg>
<div class="t" style="left:3645px;top:2074.5px;font-size:23px;color:#e6e6e6;font-weight:normal;text-shadow:0 1.5px 1.5px rgba(0,0,0,0.6);">Line Art</div>
<svg class="a" style="left:4193px;top:2079px;" width="28" height="16" viewBox="0 0 28 16"><rect x="1.5" y="2" width="2.6" height="2.6" fill="#6a6a6a"/><rect x="1.0" y="1.5" width="2.6" height="2.6" fill="#151515"/><rect x="1.5" y="9" width="2.6" height="2.6" fill="#6a6a6a"/><rect x="1.0" y="8.5" width="2.6" height="2.6" fill="#151515"/><rect x="7.8" y="2" width="2.6" height="2.6" fill="#6a6a6a"/><rect x="7.3" y="1.5" width="2.6" height="2.6" fill="#151515"/><rect x="7.8" y="9" width="2.6" height="2.6" fill="#6a6a6a"/><rect x="7.3" y="8.5" width="2.6" height="2.6" fill="#151515"/><rect x="14.1" y="2" width="2.6" height="2.6" fill="#6a6a6a"/><rect x="13.6" y="1.5" width="2.6" height="2.6" fill="#151515"/><rect x="14.1" y="9" width="2.6" height="2.6" fill="#6a6a6a"/><rect x="13.6" y="8.5" width="2.6" height="2.6" fill="#151515"/><rect x="20.4" y="2" width="2.6" height="2.6" fill="#6a6a6a"/><rect x="19.9" y="1.5" width="2.6" height="2.6" fill="#151515"/><rect x="20.4" y="9" width="2.6" height="2.6" fill="#6a6a6a"/><rect x="19.9" y="8.5" width="2.6" height="2.6" fill="#151515"/></svg>
<div class="a" style="left:3602px;top:2115px;width:626px;height:49px;background:#3d3d3d;border-radius:10px;"></div>
<svg class="a" style="left:3619px;top:2128px;" width="16" height="22" viewBox="0 0 16 22"><path d="M4 3 L12 11 L4 19" fill="none" stroke="#cfcfcf" stroke-width="2"/></svg>
<div class="t" style="left:3645px;top:2128.5px;font-size:23px;color:#e6e6e6;font-weight:normal;text-shadow:0 1.5px 1.5px rgba(0,0,0,0.6);">Custom Properties</div>
<svg class="a" style="left:4193px;top:2133px;" width="28" height="16" viewBox="0 0 28 16"><rect x="1.5" y="2" width="2.6" height="2.6" fill="#6a6a6a"/><rect x="1.0" y="1.5" width="2.6" height="2.6" fill="#151515"/><rect x="1.5" y="9" width="2.6" height="2.6" fill="#6a6a6a"/><rect x="1.0" y="8.5" width="2.6" height="2.6" fill="#151515"/><rect x="7.8" y="2" width="2.6" height="2.6" fill="#6a6a6a"/><rect x="7.3" y="1.5" width="2.6" height="2.6" fill="#151515"/><rect x="7.8" y="9" width="2.6" height="2.6" fill="#6a6a6a"/><rect x="7.3" y="8.5" width="2.6" height="2.6" fill="#151515"/><rect x="14.1" y="2" width="2.6" height="2.6" fill="#6a6a6a"/><rect x="13.6" y="1.5" width="2.6" height="2.6" fill="#151515"/><rect x="14.1" y="9" width="2.6" height="2.6" fill="#6a6a6a"/><rect x="13.6" y="8.5" width="2.6" height="2.6" fill="#151515"/><rect x="20.4" y="2" width="2.6" height="2.6" fill="#6a6a6a"/><rect x="19.9" y="1.5" width="2.6" height="2.6" fill="#151515"/><rect x="20.4" y="9" width="2.6" height="2.6" fill="#6a6a6a"/><rect x="19.9" y="8.5" width="2.6" height="2.6" fill="#151515"/></svg>
</body></html>
